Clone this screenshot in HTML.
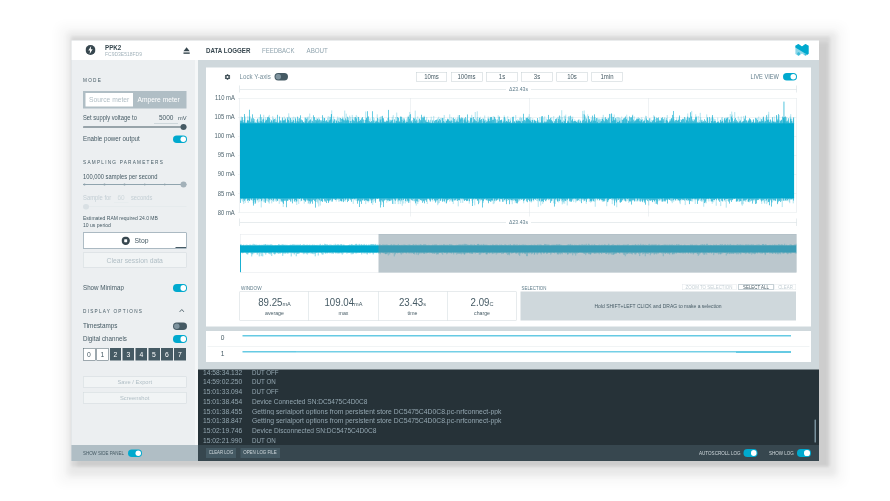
<!DOCTYPE html>
<html><head><meta charset="utf-8"><title>PPK2</title>
<style>
html,body{margin:0;padding:0;background:#fff;}
body{width:890px;height:501px;overflow:hidden;position:relative;font-family:"Liberation Sans",sans-serif;}
#s{position:absolute;left:0;top:0;width:1780.0px;height:1002.0px;transform:scale(0.5);transform-origin:0 0;filter:blur(1.3px);}
.a{position:absolute;}
.t{white-space:nowrap;}
</style></head><body><div id="s">
<div class="a" style="left:143.00px;top:81.00px;width:1495.00px;height:841.00px;background:#cfd8dc;box-shadow:14.00px 8.00px 6.00px 6.00px rgba(0,0,0,0.04), 10.00px 1.00px 6.00px 11.00px rgba(0,0,0,0.075), 13.00px 6.00px 14.00px 23.00px rgba(0,0,0,0.065), 11.00px 7.00px 22.00px 39.00px rgba(0,0,0,0.035);"></div>
<div class="a" style="left:143.00px;top:81.00px;width:1495.00px;height:38.60px;background:#fff;"></div>
<div class="a" style="left:143.00px;top:119.60px;width:253.00px;height:770.80px;background:#eceff1;"></div>
<div class="a" style="left:143.00px;top:890.40px;width:253.00px;height:31.60px;background:#b0bec5;"></div>
<div class="a" style="left:390.00px;top:119.60px;width:6.00px;height:770.80px;background:#f5f7f8;"></div>
<div class="a" style="left:396.00px;top:738.80px;width:1242.00px;height:151.60px;background:#263238;"></div>
<div class="a" style="left:396.00px;top:890.40px;width:1242.00px;height:31.60px;background:#37474f;"></div>
<svg class="a" style="left:170.80px;top:90.00px;width:20.00px;height:20.00px" viewBox="0 0 24 24"><circle cx="12" cy="12" r="12" fill="#37474f"/><path d="M13.6 2.6 L6.8 13.2 H11 L10 21.4 L17.2 10.4 H12.8 Z" fill="#fff"/></svg>
<div class="a t" style="top:85.12px;line-height:19.35px;font-size:13.82px;color:#37474f;font-weight:bold;left:210.00px;transform:scaleX(0.9027);transform-origin:0 50%;">PPK2</div>
<div class="a t" style="top:100.39px;line-height:14.82px;font-size:10.58px;color:#a3b3bb;left:210.00px;transform:scaleX(0.9458);transform-origin:0 50%;">FC9D3E518FD9</div>
<svg class="a" style="left:366.00px;top:94.00px;width:14.40px;height:14.80px" viewBox="0 0 24 26"><path d="M12 1 L23 15 H1 Z" fill="#37474f"/><rect x="1" y="19" width="22" height="5" fill="#37474f"/></svg>
<div class="a t" style="top:89.72px;line-height:20.56px;font-size:14.69px;color:#37474f;font-weight:bold;left:411.60px;transform:scaleX(0.8393);transform-origin:0 50%;">DATA LOGGER</div>
<div class="a t" style="top:89.72px;line-height:20.56px;font-size:14.69px;color:#90a4ae;left:524.00px;transform:scaleX(0.8210);transform-origin:0 50%;">FEEDBACK</div>
<div class="a t" style="top:89.72px;line-height:20.56px;font-size:14.69px;color:#90a4ae;left:613.20px;transform:scaleX(0.8459);transform-origin:0 50%;">ABOUT</div>
<svg class="a" style="left:1590.40px;top:88.00px;width:28.00px;height:24.00px" viewBox="0 0 14 12"><path d="M0.4 1.8 L3.4 0 L7 2.4 L10.4 0 L13.6 1.8 V10 L10.4 12 L7 9.4 L3.6 12 L0.4 10 Z" fill="#8ad7e9"/><path d="M0.4 1.8 L3.4 0 L7 2.4 L10.4 0 L13.6 1.8 V9.8 L12.2 10.7 L0.4 3.6 Z" fill="#00a9ce"/><path d="M2.2 9.0 L3.6 8.1 L5 9.0 V10.6 L3.6 11.5 L2.2 10.6 Z" fill="#3bbcda"/><path d="M9.2 10.0 L10.4 9.3 L11.6 10.2 L10.4 11.4 Z" fill="#3bbcda"/></svg>
<div class="a t" style="top:153.42px;line-height:13.16px;font-size:9.40px;color:#455a64;left:166.20px;letter-spacing:2.40px;">MODE</div>
<div class="a" style="left:166.20px;top:182.00px;width:206.80px;height:35.00px;background:#b0bec5;"></div>
<div class="a" style="left:171.20px;top:186.20px;width:94.80px;height:27.20px;background:#fff;"></div>
<div class="a t" style="top:189.12px;line-height:20.56px;font-size:14.69px;color:#b0bec5;left:178.00px;transform:scaleX(0.9142);transform-origin:0 50%;">Source meter</div>
<div class="a t" style="top:189.12px;line-height:20.56px;font-size:14.69px;color:#fff;left:275.20px;transform:scaleX(0.9070);transform-origin:0 50%;">Ampere meter</div>
<div class="a t" style="top:227.08px;line-height:17.84px;font-size:12.74px;color:#455a64;left:166.20px;transform:scaleX(0.9111);transform-origin:0 50%;">Set supply voltage to</div>
<div class="a t" style="top:225.12px;line-height:20.56px;font-size:14.69px;color:#455a64;left:317.60px;transform:scaleX(0.8875);transform-origin:0 50%;">5000</div>
<div class="a" style="left:308.40px;top:245.60px;width:47.20px;height:1.00px;background:#b0bec5;"></div>
<div class="a t" style="top:228.13px;line-height:16.93px;font-size:12.10px;color:#455a64;left:355.60px;transform:scaleX(0.9479);transform-origin:0 50%;">mV</div>
<div class="a" style="left:166.20px;top:253.00px;width:206.80px;height:2.20px;background:#455a64;border-radius:1.00px;"></div>
<div class="a" style="left:361.20px;top:248.40px;width:11.60px;height:11.60px;background:#455a64;border-radius:6.00px;"></div>
<div class="a t" style="top:269.08px;line-height:17.84px;font-size:12.74px;color:#455a64;left:166.20px;transform:scaleX(0.9717);transform-origin:0 50%;">Enable power output</div>
<div class="a" style="left:346.00px;top:271.00px;width:28.00px;height:15.20px;background:#00a9ce;border-radius:7.60px;"></div>
<div class="a" style="left:360.70px;top:272.90px;width:11.40px;height:11.40px;background:#ffffff;border-radius:5.70px;"></div>
<div class="a t" style="top:316.62px;line-height:13.16px;font-size:9.40px;color:#455a64;left:166.20px;letter-spacing:2.47px;">SAMPLING PARAMETERS</div>
<div class="a t" style="top:344.08px;line-height:17.84px;font-size:12.74px;color:#455a64;left:166.20px;transform:scaleX(0.9104);transform-origin:0 50%;">100,000 samples per second</div>
<div class="a" style="left:166.20px;top:368.40px;width:206.80px;height:1.60px;background:#90a4ae;"></div>
<div class="a" style="left:167.00px;top:367.40px;width:3.60px;height:3.60px;background:#90a4ae;border-radius:1.80px;"></div>
<div class="a" style="left:207.40px;top:367.40px;width:3.60px;height:3.60px;background:#90a4ae;border-radius:1.80px;"></div>
<div class="a" style="left:247.40px;top:367.40px;width:3.60px;height:3.60px;background:#90a4ae;border-radius:1.80px;"></div>
<div class="a" style="left:287.60px;top:367.40px;width:3.60px;height:3.60px;background:#90a4ae;border-radius:1.80px;"></div>
<div class="a" style="left:327.80px;top:367.40px;width:3.60px;height:3.60px;background:#90a4ae;border-radius:1.80px;"></div>
<div class="a" style="left:361.20px;top:363.40px;width:11.60px;height:11.60px;background:#a3b1b9;border-radius:6.00px;"></div>
<div class="a t" style="top:387.48px;line-height:17.84px;font-size:12.74px;color:#c3ced4;left:166.20px;transform:scaleX(0.9185);transform-origin:0 50%;">Sample for</div>
<div class="a t" style="top:386.22px;line-height:19.96px;font-size:14.26px;color:#cfd8dc;left:235.20px;transform:scaleX(0.9081);transform-origin:0 50%;">60</div>
<div class="a" style="left:227.60px;top:404.80px;width:29.60px;height:0.80px;background:#e3e8eb;"></div>
<div class="a t" style="top:387.48px;line-height:17.84px;font-size:12.74px;color:#c3ced4;left:262.00px;transform:scaleX(0.9017);transform-origin:0 50%;">seconds</div>
<div class="a" style="left:166.20px;top:412.60px;width:206.80px;height:1.20px;background:#e1e6e9;"></div>
<div class="a" style="left:166.40px;top:407.60px;width:11.20px;height:11.20px;background:#d9e0e4;border-radius:6.00px;"></div>
<div class="a t" style="top:427.84px;line-height:15.12px;font-size:10.80px;color:#455a64;left:166.20px;transform:scaleX(0.9312);transform-origin:0 50%;">Estimated RAM required 24.0 MB</div>
<div class="a t" style="top:442.44px;line-height:15.12px;font-size:10.80px;color:#455a64;left:166.20px;transform:scaleX(0.9387);transform-origin:0 50%;">10 us period</div>
<div class="a" style="left:166.20px;top:465.20px;width:206.80px;height:31.60px;background:#fff;border:1.10px solid #607d8b;box-sizing:border-box;"></div>
<div class="a" style="left:350.80px;top:494.00px;width:21.60px;height:2.00px;background:#455a64;"></div>
<svg class="a" style="left:242.80px;top:473.00px;width:16.80px;height:16.80px" viewBox="0 0 24 24"><circle cx="12" cy="12" r="12" fill="#37474f"/><rect x="7.8" y="7.8" width="8.4" height="8.4" rx="1.2" fill="#fff"/></svg>
<div class="a t" style="top:470.32px;line-height:20.56px;font-size:14.69px;color:#455a64;left:269.20px;transform:scaleX(0.9267);transform-origin:0 50%;">Stop</div>
<div class="a" style="left:166.20px;top:505.20px;width:206.80px;height:29.60px;background:#f1f4f5;border:1.00px solid #cfd8dc;box-sizing:border-box;"></div>
<div class="a t" style="top:509.52px;line-height:20.56px;font-size:14.69px;color:#b0bec5;left:213.20px;transform:scaleX(0.9272);transform-origin:0 50%;">Clear session data</div>
<div class="a t" style="top:565.68px;line-height:17.84px;font-size:12.74px;color:#455a64;left:166.20px;transform:scaleX(0.9787);transform-origin:0 50%;">Show Minimap</div>
<div class="a" style="left:346.00px;top:568.40px;width:28.00px;height:15.20px;background:#00a9ce;border-radius:7.60px;"></div>
<div class="a" style="left:360.70px;top:570.30px;width:11.40px;height:11.40px;background:#ffffff;border-radius:5.70px;"></div>
<div class="a t" style="top:614.62px;line-height:13.16px;font-size:9.40px;color:#455a64;left:166.20px;letter-spacing:2.43px;">DISPLAY OPTIONS</div>
<svg class="a" style="left:357.60px;top:617.20px;width:11.20px;height:8.00px" viewBox="0 0 14 10"><path d="M1.5 8.5 L7 2.5 L12.5 8.5" fill="none" stroke="#455a64" stroke-width="2.2"/></svg>
<div class="a t" style="top:643.28px;line-height:17.84px;font-size:12.74px;color:#455a64;left:166.20px;transform:scaleX(1.0011);transform-origin:0 50%;">Timestamps</div>
<div class="a" style="left:346.00px;top:644.80px;width:28.00px;height:15.20px;background:#455a64;border-radius:7.60px;"></div>
<div class="a" style="left:347.90px;top:646.70px;width:11.40px;height:11.40px;background:#7f949f;border-radius:5.70px;"></div>
<div class="a t" style="top:669.28px;line-height:17.84px;font-size:12.74px;color:#455a64;left:166.20px;transform:scaleX(0.9759);transform-origin:0 50%;">Digital channels</div>
<div class="a" style="left:346.00px;top:670.40px;width:28.00px;height:15.20px;background:#00a9ce;border-radius:7.60px;"></div>
<div class="a" style="left:360.70px;top:672.30px;width:11.40px;height:11.40px;background:#ffffff;border-radius:5.70px;"></div>
<div class="a" style="left:166.00px;top:696.00px;width:24.80px;height:24.80px;background:#fff;border:1.20px solid #455a64;box-sizing:border-box;"></div>
<div class="a t" style="top:697.72px;line-height:20.56px;font-size:14.69px;color:#455a64;left:-121.60px;width:600.00px;text-align:center;transform:scaleX(0.9259);transform-origin:50% 50%;">0</div>
<div class="a" style="left:192.80px;top:696.00px;width:24.00px;height:24.80px;background:#fff;border:1.20px solid #455a64;box-sizing:border-box;"></div>
<div class="a t" style="top:697.72px;line-height:20.56px;font-size:14.69px;color:#455a64;left:-95.20px;width:600.00px;text-align:center;transform:scaleX(0.9259);transform-origin:50% 50%;">1</div>
<div class="a" style="left:220.00px;top:696.00px;width:22.00px;height:24.80px;background:#455a64;"></div>
<div class="a t" style="top:697.72px;line-height:20.56px;font-size:14.69px;color:#fff;left:-69.00px;width:600.00px;text-align:center;transform:scaleX(0.9259);transform-origin:50% 50%;">2</div>
<div class="a" style="left:245.20px;top:696.00px;width:22.80px;height:24.80px;background:#455a64;"></div>
<div class="a t" style="top:697.72px;line-height:20.56px;font-size:14.69px;color:#fff;left:-43.40px;width:600.00px;text-align:center;transform:scaleX(0.9259);transform-origin:50% 50%;">3</div>
<div class="a" style="left:271.20px;top:696.00px;width:22.80px;height:24.80px;background:#455a64;"></div>
<div class="a t" style="top:697.72px;line-height:20.56px;font-size:14.69px;color:#fff;left:-17.40px;width:600.00px;text-align:center;transform:scaleX(0.9259);transform-origin:50% 50%;">4</div>
<div class="a" style="left:296.80px;top:696.00px;width:23.20px;height:24.80px;background:#455a64;"></div>
<div class="a t" style="top:697.72px;line-height:20.56px;font-size:14.69px;color:#fff;left:8.40px;width:600.00px;text-align:center;transform:scaleX(0.9259);transform-origin:50% 50%;">5</div>
<div class="a" style="left:322.00px;top:696.00px;width:24.00px;height:24.80px;background:#455a64;"></div>
<div class="a t" style="top:697.72px;line-height:20.56px;font-size:14.69px;color:#fff;left:34.00px;width:600.00px;text-align:center;transform:scaleX(0.9259);transform-origin:50% 50%;">6</div>
<div class="a" style="left:348.00px;top:696.00px;width:24.00px;height:24.80px;background:#455a64;"></div>
<div class="a t" style="top:697.72px;line-height:20.56px;font-size:14.69px;color:#fff;left:60.00px;width:600.00px;text-align:center;transform:scaleX(0.9259);transform-origin:50% 50%;">7</div>
<div class="a" style="left:166.20px;top:752.80px;width:206.80px;height:22.40px;background:#f1f4f5;border:1.00px solid #cfd8dc;box-sizing:border-box;"></div>
<div class="a t" style="top:754.63px;line-height:17.54px;font-size:12.53px;color:#b0bec5;left:234.80px;transform:scaleX(0.9201);transform-origin:0 50%;">Save / Export</div>
<div class="a" style="left:166.20px;top:784.00px;width:206.80px;height:22.80px;background:#f1f4f5;border:1.00px solid #cfd8dc;box-sizing:border-box;"></div>
<div class="a t" style="top:787.23px;line-height:17.54px;font-size:12.53px;color:#b0bec5;left:240.00px;transform:scaleX(0.9278);transform-origin:0 50%;">Screenshot</div>
<div class="a t" style="top:898.39px;line-height:14.82px;font-size:10.58px;color:#455a64;left:166.20px;transform:scaleX(0.8395);transform-origin:0 50%;">SHOW SIDE PANEL</div>
<div class="a" style="left:256.00px;top:898.80px;width:28.00px;height:15.20px;background:#00a9ce;border-radius:7.60px;"></div>
<div class="a" style="left:270.70px;top:900.70px;width:11.40px;height:11.40px;background:#ffffff;border-radius:5.70px;"></div>
<div class="a" style="left:411.60px;top:135.40px;width:1210.00px;height:517.80px;background:#fff;"></div>
<div class="a" style="left:411.60px;top:660.80px;width:1210.00px;height:63.60px;background:#fff;"></div>
<svg class="a" style="left:448.20px;top:146.60px;width:14.00px;height:14.00px" viewBox="0 0 24 24"><path fill="#37474f" d="M19.14 12.94c.04-.3.06-.61.06-.94 0-.32-.02-.64-.07-.94l2.03-1.58a.49.49 0 0 0 .12-.61l-1.92-3.32a.49.49 0 0 0-.59-.22l-2.39.96c-.5-.38-1.03-.7-1.62-.94l-.36-2.54a.484.484 0 0 0-.48-.41h-3.84c-.24 0-.43.17-.47.41l-.36 2.54c-.59.24-1.13.57-1.62.94l-2.39-.96a.49.49 0 0 0-.59.22L2.74 8.87c-.12.21-.08.47.12.61l2.03 1.58c-.05.3-.09.63-.09.94s.02.64.07.94l-2.03 1.58a.49.49 0 0 0-.12.61l1.92 3.32c.12.22.37.29.59.22l2.39-.96c.5.38 1.03.7 1.62.94l.36 2.54c.05.24.24.41.48.41h3.84c.24 0 .44-.17.47-.41l.36-2.54c.59-.24 1.13-.56 1.62-.94l2.39.96c.22.08.47 0 .59-.22l1.92-3.32c.12-.22.07-.47-.12-.61l-2.01-1.58zM12 15.6A3.6 3.6 0 1 1 12 8.4a3.6 3.6 0 0 1 0 7.2z"/></svg>
<div class="a t" style="top:144.28px;line-height:17.84px;font-size:12.74px;color:#78909c;left:478.80px;transform:scaleX(0.9710);transform-origin:0 50%;">Lock Y-axis</div>
<div class="a" style="left:548.80px;top:146.00px;width:27.20px;height:14.80px;background:#455a64;border-radius:7.40px;"></div>
<div class="a" style="left:550.70px;top:147.90px;width:11.00px;height:11.00px;background:#7f949f;border-radius:5.50px;"></div>
<div class="a" style="left:832.00px;top:143.60px;width:62.40px;height:19.00px;background:#fff;border:1.00px solid #c5cfd4;box-sizing:border-box;"></div>
<div class="a t" style="top:144.33px;line-height:18.14px;font-size:12.96px;color:#455a64;left:563.20px;width:600.00px;text-align:center;transform:scaleX(0.9259);transform-origin:50% 50%;">10ms</div>
<div class="a" style="left:902.16px;top:143.60px;width:62.40px;height:19.00px;background:#fff;border:1.00px solid #c5cfd4;box-sizing:border-box;"></div>
<div class="a t" style="top:144.33px;line-height:18.14px;font-size:12.96px;color:#455a64;left:633.36px;width:600.00px;text-align:center;transform:scaleX(0.9259);transform-origin:50% 50%;">100ms</div>
<div class="a" style="left:972.32px;top:143.60px;width:62.40px;height:19.00px;background:#fff;border:1.00px solid #c5cfd4;box-sizing:border-box;"></div>
<div class="a t" style="top:144.33px;line-height:18.14px;font-size:12.96px;color:#455a64;left:703.52px;width:600.00px;text-align:center;transform:scaleX(0.9259);transform-origin:50% 50%;">1s</div>
<div class="a" style="left:1042.48px;top:143.60px;width:62.40px;height:19.00px;background:#fff;border:1.00px solid #c5cfd4;box-sizing:border-box;"></div>
<div class="a t" style="top:144.33px;line-height:18.14px;font-size:12.96px;color:#455a64;left:773.68px;width:600.00px;text-align:center;transform:scaleX(0.9259);transform-origin:50% 50%;">3s</div>
<div class="a" style="left:1112.64px;top:143.60px;width:62.40px;height:19.00px;background:#fff;border:1.00px solid #c5cfd4;box-sizing:border-box;"></div>
<div class="a t" style="top:144.33px;line-height:18.14px;font-size:12.96px;color:#455a64;left:843.84px;width:600.00px;text-align:center;transform:scaleX(0.9259);transform-origin:50% 50%;">10s</div>
<div class="a" style="left:1182.80px;top:143.60px;width:62.40px;height:19.00px;background:#fff;border:1.00px solid #c5cfd4;box-sizing:border-box;"></div>
<div class="a t" style="top:144.33px;line-height:18.14px;font-size:12.96px;color:#455a64;left:914.00px;width:600.00px;text-align:center;transform:scaleX(0.9259);transform-origin:50% 50%;">1min</div>
<div class="a t" style="top:143.68px;line-height:17.84px;font-size:12.74px;color:#607d8b;left:1501.20px;transform:scaleX(0.8911);transform-origin:0 50%;">LIVE VIEW</div>
<div class="a" style="left:1566.00px;top:145.60px;width:28.00px;height:15.20px;background:#00a9ce;border-radius:7.60px;"></div>
<div class="a" style="left:1580.70px;top:147.50px;width:11.40px;height:11.40px;background:#ffffff;border-radius:5.70px;"></div>
<div class="a" style="left:479.60px;top:177.70px;width:532.40px;height:1.00px;background:#cfd8dc;"></div>
<div class="a" style="left:1062.00px;top:177.70px;width:530.80px;height:1.00px;background:#cfd8dc;"></div>
<div class="a" style="left:479.10px;top:170.60px;width:1.00px;height:14.80px;background:#cfd8dc;"></div>
<div class="a" style="left:1592.30px;top:170.60px;width:1.00px;height:14.80px;background:#cfd8dc;"></div>
<div class="a t" style="top:170.19px;line-height:14.82px;font-size:10.58px;color:#607d8b;left:736.80px;width:600.00px;text-align:center;transform:scaleX(0.9782);transform-origin:50% 50%;">Δ23.43s</div>
<div class="a" style="left:479.60px;top:444.30px;width:532.40px;height:1.00px;background:#cfd8dc;"></div>
<div class="a" style="left:1062.00px;top:444.30px;width:530.80px;height:1.00px;background:#cfd8dc;"></div>
<div class="a" style="left:479.10px;top:437.20px;width:1.00px;height:14.80px;background:#cfd8dc;"></div>
<div class="a" style="left:1592.30px;top:437.20px;width:1.00px;height:14.80px;background:#cfd8dc;"></div>
<div class="a t" style="top:436.79px;line-height:14.82px;font-size:10.58px;color:#607d8b;left:736.80px;width:600.00px;text-align:center;transform:scaleX(0.9782);transform-origin:50% 50%;">Δ23.43s</div>
<div class="a" style="left:475.60px;top:195.50px;width:1117.20px;height:1.00px;background:#e3e8eb;"></div>
<div class="a t" style="top:187.95px;line-height:17.69px;font-size:12.64px;color:#506670;right:1310.80px;text-align:right;transform:scaleX(0.9259);transform-origin:100% 50%;">110 mA</div>
<div class="a" style="left:475.60px;top:233.63px;width:1117.20px;height:1.00px;background:#e3e8eb;"></div>
<div class="a t" style="top:226.09px;line-height:17.69px;font-size:12.64px;color:#506670;right:1310.80px;text-align:right;transform:scaleX(0.9259);transform-origin:100% 50%;">105 mA</div>
<div class="a" style="left:475.60px;top:271.77px;width:1117.20px;height:1.00px;background:#e3e8eb;"></div>
<div class="a t" style="top:264.22px;line-height:17.69px;font-size:12.64px;color:#506670;right:1310.80px;text-align:right;transform:scaleX(0.9259);transform-origin:100% 50%;">100 mA</div>
<div class="a" style="left:475.60px;top:309.90px;width:1117.20px;height:1.00px;background:#e3e8eb;"></div>
<div class="a t" style="top:302.35px;line-height:17.69px;font-size:12.64px;color:#506670;right:1310.80px;text-align:right;transform:scaleX(0.9259);transform-origin:100% 50%;">95 mA</div>
<div class="a" style="left:475.60px;top:348.03px;width:1117.20px;height:1.00px;background:#e3e8eb;"></div>
<div class="a t" style="top:340.49px;line-height:17.69px;font-size:12.64px;color:#506670;right:1310.80px;text-align:right;transform:scaleX(0.9259);transform-origin:100% 50%;">90 mA</div>
<div class="a" style="left:475.60px;top:386.17px;width:1117.20px;height:1.00px;background:#e3e8eb;"></div>
<div class="a t" style="top:378.62px;line-height:17.69px;font-size:12.64px;color:#506670;right:1310.80px;text-align:right;transform:scaleX(0.9259);transform-origin:100% 50%;">85 mA</div>
<div class="a" style="left:475.60px;top:424.30px;width:1117.20px;height:1.00px;background:#e3e8eb;"></div>
<div class="a t" style="top:416.75px;line-height:17.69px;font-size:12.64px;color:#506670;right:1310.80px;text-align:right;transform:scaleX(0.9259);transform-origin:100% 50%;">80 mA</div>
<div class="a" style="left:820.50px;top:196.00px;width:1.00px;height:236.60px;background:#dfe5e8;"></div>
<div class="a" style="left:1058.30px;top:196.00px;width:1.00px;height:236.60px;background:#dfe5e8;"></div>
<div class="a" style="left:1295.90px;top:196.00px;width:1.00px;height:236.60px;background:#dfe5e8;"></div>
<div class="a" style="left:479.00px;top:196.00px;width:1.20px;height:228.80px;background:#dfe5e8;"></div>
<div class="a" style="left:1592.20px;top:196.00px;width:1.20px;height:228.80px;background:#dfe5e8;"></div>
<svg class="a" style="left:479.60px;top:196.00px;width:1113.20px;height:228.80px" viewBox="0 0 556.60 114.40" preserveAspectRatio="none"><rect x="0" y="25.30" width="554.10" height="74.90" fill="#00a9ce"/><path d="M0.50 25.80V22.84M1.50 25.80V22.77M2.50 25.80V19.16M3.50 25.80V24.49M4.50 25.80V15.99M5.50 25.80V25.28M6.50 25.80V25.06M7.50 25.80V22.11M8.50 25.80V22.58M9.50 25.80V11.72M10.50 25.80V23.70M11.50 25.80V20.42M12.50 25.80V16.30M13.50 25.80V20.20M14.50 25.80V24.67M15.50 25.80V24.97M16.50 25.80V25.05M17.50 25.80V21.13M18.50 25.80V24.57M19.50 25.80V24.88M20.50 25.80V16.41M21.50 25.80V23.27M22.50 25.80V24.31M23.50 25.80V20.65M24.50 25.80V24.72M25.50 25.80V23.12M26.50 25.80V22.05M27.50 25.80V19.08M28.50 25.80V18.69M29.50 25.80V19.77M30.50 25.80V24.34M31.50 25.80V22.16M32.50 25.80V24.58M33.50 25.80V22.08M34.50 25.80V21.05M35.50 25.80V24.14M36.50 25.80V23.96M37.50 25.80V16.79M38.50 25.80V25.26M39.50 25.80V18.62M40.50 25.80V22.40M41.50 25.80V24.75M42.50 25.80V19.45M43.50 25.80V22.52M44.50 25.80V22.24M45.50 25.80V20.48M46.50 25.80V24.66M47.50 25.80V20.46M48.50 25.80V22.12M49.50 25.80V24.70M50.50 25.80V20.11M51.50 25.80V24.27M52.50 25.80V23.86M53.50 25.80V21.98M54.50 25.80V24.87M55.50 25.80V20.47M56.50 25.80V24.80M57.50 25.80V18.66M58.50 25.80V23.58M59.50 25.80V20.12M60.50 25.80V17.32M61.50 25.80V21.57M62.50 25.80V22.24M63.50 25.80V24.24M64.50 25.80V25.25M65.50 25.80V19.60M66.50 25.80V21.06M67.50 25.80V24.83M68.50 25.80V23.40M69.50 25.80V22.33M70.50 25.80V21.42M71.50 25.80V24.85M72.50 25.80V22.82M73.50 25.80V17.29M74.50 25.80V19.08M75.50 25.80V21.96M76.50 25.80V22.24M77.50 25.80V20.58M78.50 25.80V22.30M79.50 25.80V21.50M80.50 25.80V22.25M81.50 25.80V22.42M82.50 25.80V17.22M83.50 25.80V22.93M84.50 25.80V20.03M85.50 25.80V23.31M86.50 25.80V22.09M87.50 25.80V23.78M88.50 25.80V24.23M89.50 25.80V22.22M90.50 25.80V21.49M91.50 25.80V16.10M92.50 25.80V24.87M93.50 25.80V23.48M94.50 25.80V21.29M95.50 25.80V25.07M96.50 25.80V22.69M97.50 25.80V24.79M98.50 25.80V23.16M99.50 25.80V23.88M100.50 25.80V20.01M101.50 25.80V20.96M102.50 25.80V20.69M103.50 25.80V21.70M104.50 25.80V22.41M105.50 25.80V20.35M106.50 25.80V22.52M107.50 25.80V18.78M108.50 25.80V22.33M109.50 25.80V25.23M110.50 25.80V22.96M111.50 25.80V25.10M112.50 25.80V21.40M113.50 25.80V22.31M114.50 25.80V23.18M115.50 25.80V19.00M116.50 25.80V20.40M117.50 25.80V24.26M118.50 25.80V18.95M119.50 25.80V22.99M120.50 25.80V21.93M121.50 25.80V20.40M122.50 25.80V19.24M123.50 25.80V21.47M124.50 25.80V24.94M125.50 25.80V21.84M126.50 25.80V19.88M127.50 25.80V13.20M128.50 25.80V18.44M129.50 25.80V23.26M130.50 25.80V24.04M131.50 25.80V22.98M132.50 25.80V13.22M133.50 25.80V22.33M134.50 25.80V24.83M135.50 25.80V24.15M136.50 25.80V22.75M137.50 25.80V19.91M138.50 25.80V24.26M139.50 25.80V24.55M140.50 25.80V21.54M141.50 25.80V24.39M142.50 25.80V17.87M143.50 25.80V20.20M144.50 25.80V24.00M145.50 25.80V24.16M146.50 25.80V22.56M147.50 25.80V23.21M148.50 25.80V11.90M149.50 25.80V24.41M150.50 25.80V23.59M151.50 25.80V22.65M152.50 25.80V21.75M153.50 25.80V25.24M154.50 25.80V21.37M155.50 25.80V24.62M156.50 25.80V23.06M157.50 25.80V19.02M158.50 25.80V19.70M159.50 25.80V23.63M160.50 25.80V18.53M161.50 25.80V18.75M162.50 25.80V24.42M163.50 25.80V23.04M164.50 25.80V21.46M165.50 25.80V25.00M166.50 25.80V23.93M167.50 25.80V23.99M168.50 25.80V18.69M169.50 25.80V20.72M170.50 25.80V16.17M171.50 25.80V23.36M172.50 25.80V24.74M173.50 25.80V19.90M174.50 25.80V20.80M175.50 25.80V22.82M176.50 25.80V21.50M177.50 25.80V25.22M178.50 25.80V24.67M179.50 25.80V20.91M180.50 25.80V22.31M181.50 25.80V16.75M182.50 25.80V19.43M183.50 25.80V19.57M184.50 25.80V18.86M185.50 25.80V22.45M186.50 25.80V23.92M187.50 25.80V23.86M188.50 25.80V21.78M189.50 25.80V24.65M190.50 25.80V24.84M191.50 25.80V25.19M192.50 25.80V22.44M193.50 25.80V25.02M194.50 25.80V22.87M195.50 25.80V21.99M196.50 25.80V21.81M197.50 25.80V24.35M198.50 25.80V22.96M199.50 25.80V20.94M200.50 25.80V22.23M201.50 25.80V25.14M202.50 25.80V20.05M203.50 25.80V22.91M204.50 25.80V24.48M205.50 25.80V25.03M206.50 25.80V23.08M207.50 25.80V20.73M208.50 25.80V21.41M209.50 25.80V22.93M210.50 25.80V23.49M211.50 25.80V22.44M212.50 25.80V24.91M213.50 25.80V19.61M214.50 25.80V20.94M215.50 25.80V24.31M216.50 25.80V23.54M217.50 25.80V23.42M218.50 25.80V23.78M219.50 25.80V17.04M220.50 25.80V21.40M221.50 25.80V19.43M222.50 25.80V19.80M223.50 25.80V25.18M224.50 25.80V20.33M225.50 25.80V19.07M226.50 25.80V24.26M227.50 25.80V16.45M228.50 25.80V24.97M229.50 25.80V24.92M230.50 25.80V19.74M231.50 25.80V19.95M232.50 25.80V24.59M233.50 25.80V19.03M234.50 25.80V21.07M235.50 25.80V22.49M236.50 25.80V23.10M237.50 25.80V24.40M238.50 25.80V23.61M239.50 25.80V19.78M240.50 25.80V21.97M241.50 25.80V21.11M242.50 25.80V25.12M243.50 25.80V20.72M244.50 25.80V22.76M245.50 25.80V24.83M246.50 25.80V23.85M247.50 25.80V23.44M248.50 25.80V21.24M249.50 25.80V23.23M250.50 25.80V19.29M251.50 25.80V18.96M252.50 25.80V21.95M253.50 25.80V21.95M254.50 25.80V18.82M255.50 25.80V20.72M256.50 25.80V24.85M257.50 25.80V24.61M258.50 25.80V23.27M259.50 25.80V18.61M260.50 25.80V22.21M261.50 25.80V21.95M262.50 25.80V24.76M263.50 25.80V23.52M264.50 25.80V19.09M265.50 25.80V24.18M266.50 25.80V23.00M267.50 25.80V23.76M268.50 25.80V21.07M269.50 25.80V23.85M270.50 25.80V22.66M271.50 25.80V25.19M272.50 25.80V18.92M273.50 25.80V18.70M274.50 25.80V23.50M275.50 25.80V25.06M276.50 25.80V22.58M277.50 25.80V23.52M278.50 25.80V22.64M279.50 25.80V22.93M280.50 25.80V23.56M281.50 25.80V25.01M282.50 25.80V22.87M283.50 25.80V15.76M284.50 25.80V21.88M285.50 25.80V22.62M286.50 25.80V20.05M287.50 25.80V20.03M288.50 25.80V21.17M289.50 25.80V22.29M290.50 25.80V23.03M291.50 25.80V24.21M292.50 25.80V22.03M293.50 25.80V24.80M294.50 25.80V22.22M295.50 25.80V22.89M296.50 25.80V24.99M297.50 25.80V20.02M298.50 25.80V24.48M299.50 25.80V24.61M300.50 25.80V24.89M301.50 25.80V18.39M302.50 25.80V18.12M303.50 25.80V25.06M304.50 25.80V23.53M305.50 25.80V24.30M306.50 25.80V23.64M307.50 25.80V21.88M308.50 25.80V16.91M309.50 25.80V21.51M310.50 25.80V19.81M311.50 25.80V22.11M312.50 25.80V23.40M313.50 25.80V25.10M314.50 25.80V23.14M315.50 25.80V21.05M316.50 25.80V20.54M317.50 25.80V25.04M318.50 25.80V20.84M319.50 25.80V17.56M320.50 25.80V21.63M321.50 25.80V24.42M322.50 25.80V24.16M323.50 25.80V25.15M324.50 25.80V23.20M325.50 25.80V20.87M326.50 25.80V25.10M327.50 25.80V23.30M328.50 25.80V23.40M329.50 25.80V24.67M330.50 25.80V17.72M331.50 25.80V22.51M332.50 25.80V20.95M333.50 25.80V23.28M334.50 25.80V23.01M335.50 25.80V23.06M336.50 25.80V24.06M337.50 25.80V24.72M338.50 25.80V21.63M339.50 25.80V24.90M340.50 25.80V23.08M341.50 25.80V24.95M342.50 25.80V22.56M343.50 25.80V21.82M344.50 25.80V16.49M345.50 25.80V23.22M346.50 25.80V20.48M347.50 25.80V24.79M348.50 25.80V18.11M349.50 25.80V20.95M350.50 25.80V23.68M351.50 25.80V22.68M352.50 25.80V17.63M353.50 25.80V22.44M354.50 25.80V16.36M355.50 25.80V22.83M356.50 25.80V19.99M357.50 25.80V23.84M358.50 25.80V25.23M359.50 25.80V24.85M360.50 25.80V24.43M361.50 25.80V22.98M362.50 25.80V20.89M363.50 25.80V22.33M364.50 25.80V23.21M365.50 25.80V19.14M366.50 25.80V20.96M367.50 25.80V21.85M368.50 25.80V20.36M369.50 25.80V15.93M370.50 25.80V25.26M371.50 25.80V15.40M372.50 25.80V23.04M373.50 25.80V19.02M374.50 25.80V22.31M375.50 25.80V19.95M376.50 25.80V25.19M377.50 25.80V23.99M378.50 25.80V23.93M379.50 25.80V23.05M380.50 25.80V25.24M381.50 25.80V25.12M382.50 25.80V22.05M383.50 25.80V20.43M384.50 25.80V19.71M385.50 25.80V18.52M386.50 25.80V21.14M387.50 25.80V25.23M388.50 25.80V22.96M389.50 25.80V18.47M390.50 25.80V19.35M391.50 25.80V19.24M392.50 25.80V17.45M393.50 25.80V21.62M394.50 25.80V23.34M395.50 25.80V22.64M396.50 25.80V20.67M397.50 25.80V21.02M398.50 25.80V21.13M399.50 25.80V23.18M400.50 25.80V23.46M401.50 25.80V22.01M402.50 25.80V24.31M403.50 25.80V23.24M404.50 25.80V22.54M405.50 25.80V24.94M406.50 25.80V20.49M407.50 25.80V21.99M408.50 25.80V22.82M409.50 25.80V20.25M410.50 25.80V23.70M411.50 25.80V24.22M412.50 25.80V22.75M413.50 25.80V21.72M414.50 25.80V18.53M415.50 25.80V24.31M416.50 25.80V19.62M417.50 25.80V20.06M418.50 25.80V19.42M419.50 25.80V22.91M420.50 25.80V22.63M421.50 25.80V20.13M422.50 25.80V19.23M423.50 25.80V21.21M424.50 25.80V24.95M425.50 25.80V25.12M426.50 25.80V21.96M427.50 25.80V22.66M428.50 25.80V24.63M429.50 25.80V23.48M430.50 25.80V22.49M431.50 25.80V20.21M432.50 25.80V16.91M433.50 25.80V13.00M434.50 25.80V23.24M435.50 25.80V22.17M436.50 25.80V21.85M437.50 25.80V22.79M438.50 25.80V22.08M439.50 25.80V17.49M440.50 25.80V24.13M441.50 25.80V21.82M442.50 25.80V20.92M443.50 25.80V20.89M444.50 25.80V18.98M445.50 25.80V24.40M446.50 25.80V22.42M447.50 25.80V18.66M448.50 25.80V23.36M449.50 25.80V19.76M450.50 25.80V14.24M451.50 25.80V18.51M452.50 25.80V22.59M453.50 25.80V23.34M454.50 25.80V21.43M455.50 25.80V19.33M456.50 25.80V19.22M457.50 25.80V24.44M458.50 25.80V24.95M459.50 25.80V24.51M460.50 25.80V24.73M461.50 25.80V23.54M462.50 25.80V24.16M463.50 25.80V23.11M464.50 25.80V21.20M465.50 25.80V22.71M466.50 25.80V24.27M467.50 25.80V19.42M468.50 25.80V25.19M469.50 25.80V18.99M470.50 25.80V25.04M471.50 25.80V23.03M472.50 25.80V17.02M473.50 25.80V23.52M474.50 25.80V23.18M475.50 25.80V23.13M476.50 25.80V24.77M477.50 25.80V24.04M478.50 25.80V23.70M479.50 25.80V24.89M480.50 25.80V21.80M481.50 25.80V23.52M482.50 25.80V23.01M483.50 25.80V25.21M484.50 25.80V20.34M485.50 25.80V22.53M486.50 25.80V20.65M487.50 25.80V19.64M488.50 25.80V24.68M489.50 25.80V21.63M490.50 25.80V24.29M491.50 25.80V18.55M492.50 25.80V20.29M493.50 25.80V23.16M494.50 25.80V21.47M495.50 25.80V19.95M496.50 25.80V21.82M497.50 25.80V23.22M498.50 25.80V24.43M499.50 25.80V23.32M500.50 25.80V22.51M501.50 25.80V24.56M502.50 25.80V23.40M503.50 25.80V22.95M504.50 25.80V20.55M505.50 25.80V17.65M506.50 25.80V22.40M507.50 25.80V24.48M508.50 25.80V22.69M509.50 25.80V20.24M510.50 25.80V21.37M511.50 25.80V24.60M512.50 25.80V23.91M513.50 25.80V21.39M514.50 25.80V24.77M515.50 25.80V19.84M516.50 25.80V20.54M517.50 25.80V22.07M518.50 25.80V24.25M519.50 25.80V23.64M520.50 25.80V23.56M521.50 25.80V21.19M522.50 25.80V22.89M523.50 25.80V18.76M524.50 25.80V24.36M525.50 25.80V23.12M526.50 25.80V17.19M527.50 25.80V21.83M528.50 25.80V21.47M529.50 25.80V23.99M530.50 25.80V21.50M531.50 25.80V24.73M532.50 25.80V19.19M533.50 25.80V23.82M534.50 25.80V23.79M535.50 25.80V24.10M536.50 25.80V17.04M537.50 25.80V22.47M538.50 25.80V16.09M539.50 25.80V24.81M540.50 25.80V22.71M541.50 25.80V21.81M542.50 25.80V18.64M543.50 25.80V19.50M544.50 25.80V19.12M545.50 25.80V18.58M546.50 25.80V23.40M547.50 25.80V22.78M548.50 25.80V20.24M549.50 25.80V25.15M550.50 25.80V20.63M551.50 25.80V22.94M552.50 25.80V25.07M553.50 25.80V19.54" stroke="#00a9ce" stroke-width="1.0" fill="none" opacity="0.6"/><path d="M0.50 99.70V104.92M1.50 99.70V100.71M2.50 99.70V100.50M3.50 99.70V101.31M4.50 99.70V102.80M5.50 99.70V101.35M6.50 99.70V100.66M7.50 99.70V102.86M8.50 99.70V101.92M9.50 99.70V103.04M10.50 99.70V100.27M11.50 99.70V102.20M12.50 99.70V100.41M13.50 99.70V107.59M14.50 99.70V101.90M15.50 99.70V105.62M16.50 99.70V100.26M17.50 99.70V102.36M18.50 99.70V100.84M19.50 99.70V100.47M20.50 99.70V101.08M21.50 99.70V102.87M22.50 99.70V100.46M23.50 99.70V100.27M24.50 99.70V100.80M25.50 99.70V104.96M26.50 99.70V100.35M27.50 99.70V100.39M28.50 99.70V101.15M29.50 99.70V101.47M30.50 99.70V100.90M31.50 99.70V101.96M32.50 99.70V100.43M33.50 99.70V101.93M34.50 99.70V100.47M35.50 99.70V100.57M36.50 99.70V101.09M37.50 99.70V102.72M38.50 99.70V101.11M39.50 99.70V100.84M40.50 99.70V101.20M41.50 99.70V103.54M42.50 99.70V103.58M43.50 99.70V105.89M44.50 99.70V102.69M45.50 99.70V102.78M46.50 99.70V109.28M47.50 99.70V102.71M48.50 99.70V100.95M49.50 99.70V101.80M50.50 99.70V103.59M51.50 99.70V100.88M52.50 99.70V105.38M53.50 99.70V100.87M54.50 99.70V103.58M55.50 99.70V102.02M56.50 99.70V103.41M57.50 99.70V100.37M58.50 99.70V100.61M59.50 99.70V101.04M60.50 99.70V100.23M61.50 99.70V102.68M62.50 99.70V100.34M63.50 99.70V101.82M64.50 99.70V102.36M65.50 99.70V103.69M66.50 99.70V101.66M67.50 99.70V101.67M68.50 99.70V102.55M69.50 99.70V103.26M70.50 99.70V105.53M71.50 99.70V103.57M72.50 99.70V105.71M73.50 99.70V101.73M74.50 99.70V103.07M75.50 99.70V109.62M76.50 99.70V101.11M77.50 99.70V100.64M78.50 99.70V101.27M79.50 99.70V101.65M80.50 99.70V100.35M81.50 99.70V102.99M82.50 99.70V104.01M83.50 99.70V100.93M84.50 99.70V102.66M85.50 99.70V103.54M86.50 99.70V105.06M87.50 99.70V102.51M88.50 99.70V105.04M89.50 99.70V102.48M90.50 99.70V102.28M91.50 99.70V100.67M92.50 99.70V103.54M93.50 99.70V100.82M94.50 99.70V101.26M95.50 99.70V102.04M96.50 99.70V100.93M97.50 99.70V100.40M98.50 99.70V100.61M99.50 99.70V100.83M100.50 99.70V102.79M101.50 99.70V103.31M102.50 99.70V101.12M103.50 99.70V104.12M104.50 99.70V100.30M105.50 99.70V101.53M106.50 99.70V100.40M107.50 99.70V104.08M108.50 99.70V102.98M109.50 99.70V100.24M110.50 99.70V101.58M111.50 99.70V103.77M112.50 99.70V101.15M113.50 99.70V100.67M114.50 99.70V101.23M115.50 99.70V100.65M116.50 99.70V100.37M117.50 99.70V105.72M118.50 99.70V102.25M119.50 99.70V109.02M120.50 99.70V103.22M121.50 99.70V105.91M122.50 99.70V102.25M123.50 99.70V100.67M124.50 99.70V102.82M125.50 99.70V102.08M126.50 99.70V102.21M127.50 99.70V103.18M128.50 99.70V103.12M129.50 99.70V100.40M130.50 99.70V101.11M131.50 99.70V105.16M132.50 99.70V101.40M133.50 99.70V101.13M134.50 99.70V100.70M135.50 99.70V104.81M136.50 99.70V100.49M137.50 99.70V100.92M138.50 99.70V100.24M139.50 99.70V103.53M140.50 99.70V109.51M141.50 99.70V102.44M142.50 99.70V103.64M143.50 99.70V109.06M144.50 99.70V102.38M145.50 99.70V101.52M146.50 99.70V101.88M147.50 99.70V102.58M148.50 99.70V101.82M149.50 99.70V102.82M150.50 99.70V102.67M151.50 99.70V101.69M152.50 99.70V105.91M153.50 99.70V100.63M154.50 99.70V101.39M155.50 99.70V102.84M156.50 99.70V100.54M157.50 99.70V100.32M158.50 99.70V101.75M159.50 99.70V102.16M160.50 99.70V100.75M161.50 99.70V102.16M162.50 99.70V100.28M163.50 99.70V101.98M164.50 99.70V100.86M165.50 99.70V103.00M166.50 99.70V100.93M167.50 99.70V102.68M168.50 99.70V104.85M169.50 99.70V100.60M170.50 99.70V100.56M171.50 99.70V102.21M172.50 99.70V102.61M173.50 99.70V100.96M174.50 99.70V100.72M175.50 99.70V105.36M176.50 99.70V103.25M177.50 99.70V103.54M178.50 99.70V100.95M179.50 99.70V100.97M180.50 99.70V102.08M181.50 99.70V102.60M182.50 99.70V104.79M183.50 99.70V103.30M184.50 99.70V105.34M185.50 99.70V102.30M186.50 99.70V103.78M187.50 99.70V100.62M188.50 99.70V100.51M189.50 99.70V101.67M190.50 99.70V103.56M191.50 99.70V100.42M192.50 99.70V101.78M193.50 99.70V100.96M194.50 99.70V102.45M195.50 99.70V104.62M196.50 99.70V101.77M197.50 99.70V102.20M198.50 99.70V101.19M199.50 99.70V100.67M200.50 99.70V102.78M201.50 99.70V100.46M202.50 99.70V103.78M203.50 99.70V100.97M204.50 99.70V103.34M205.50 99.70V101.45M206.50 99.70V105.21M207.50 99.70V102.28M208.50 99.70V101.74M209.50 99.70V101.03M210.50 99.70V100.51M211.50 99.70V100.89M212.50 99.70V103.71M213.50 99.70V100.58M214.50 99.70V102.39M215.50 99.70V101.74M216.50 99.70V100.74M217.50 99.70V102.93M218.50 99.70V102.06M219.50 99.70V102.06M220.50 99.70V100.29M221.50 99.70V100.60M222.50 99.70V100.43M223.50 99.70V101.39M224.50 99.70V102.88M225.50 99.70V102.06M226.50 99.70V103.02M227.50 99.70V102.78M228.50 99.70V100.85M229.50 99.70V103.25M230.50 99.70V100.97M231.50 99.70V100.70M232.50 99.70V108.01M233.50 99.70V101.14M234.50 99.70V100.44M235.50 99.70V101.13M236.50 99.70V101.17M237.50 99.70V102.66M238.50 99.70V106.18M239.50 99.70V101.02M240.50 99.70V100.77M241.50 99.70V101.40M242.50 99.70V109.49M243.50 99.70V103.12M244.50 99.70V101.24M245.50 99.70V100.59M246.50 99.70V101.89M247.50 99.70V101.30M248.50 99.70V105.24M249.50 99.70V102.99M250.50 99.70V103.79M251.50 99.70V102.33M252.50 99.70V102.57M253.50 99.70V100.25M254.50 99.70V102.75M255.50 99.70V101.38M256.50 99.70V102.23M257.50 99.70V101.82M258.50 99.70V100.27M259.50 99.70V103.45M260.50 99.70V100.95M261.50 99.70V100.99M262.50 99.70V103.80M263.50 99.70V100.26M264.50 99.70V102.13M265.50 99.70V101.10M266.50 99.70V106.15M267.50 99.70V101.12M268.50 99.70V102.12M269.50 99.70V106.19M270.50 99.70V101.08M271.50 99.70V102.01M272.50 99.70V101.55M273.50 99.70V101.41M274.50 99.70V101.71M275.50 99.70V103.26M276.50 99.70V105.22M277.50 99.70V105.40M278.50 99.70V101.18M279.50 99.70V101.32M280.50 99.70V101.00M281.50 99.70V101.84M282.50 99.70V101.10M283.50 99.70V103.15M284.50 99.70V101.67M285.50 99.70V100.86M286.50 99.70V103.40M287.50 99.70V104.22M288.50 99.70V101.81M289.50 99.70V103.26M290.50 99.70V100.78M291.50 99.70V103.06M292.50 99.70V100.35M293.50 99.70V102.35M294.50 99.70V101.11M295.50 99.70V101.82M296.50 99.70V100.51M297.50 99.70V100.79M298.50 99.70V100.45M299.50 99.70V103.25M300.50 99.70V100.42M301.50 99.70V103.18M302.50 99.70V103.14M303.50 99.70V104.14M304.50 99.70V101.40M305.50 99.70V103.11M306.50 99.70V101.83M307.50 99.70V100.54M308.50 99.70V100.60M309.50 99.70V100.89M310.50 99.70V104.91M311.50 99.70V103.23M312.50 99.70V100.75M313.50 99.70V100.67M314.50 99.70V108.58M315.50 99.70V101.39M316.50 99.70V100.22M317.50 99.70V103.60M318.50 99.70V100.35M319.50 99.70V103.08M320.50 99.70V100.58M321.50 99.70V100.97M322.50 99.70V101.82M323.50 99.70V101.28M324.50 99.70V101.55M325.50 99.70V102.93M326.50 99.70V100.91M327.50 99.70V101.79M328.50 99.70V100.24M329.50 99.70V103.30M330.50 99.70V103.59M331.50 99.70V103.68M332.50 99.70V101.43M333.50 99.70V100.58M334.50 99.70V100.36M335.50 99.70V100.87M336.50 99.70V100.62M337.50 99.70V102.64M338.50 99.70V102.15M339.50 99.70V100.70M340.50 99.70V100.45M341.50 99.70V105.16M342.50 99.70V100.67M343.50 99.70V100.78M344.50 99.70V102.81M345.50 99.70V101.03M346.50 99.70V103.89M347.50 99.70V100.56M348.50 99.70V100.43M349.50 99.70V100.74M350.50 99.70V102.89M351.50 99.70V103.36M352.50 99.70V101.09M353.50 99.70V102.99M354.50 99.70V100.82M355.50 99.70V100.49M356.50 99.70V100.45M357.50 99.70V101.53M358.50 99.70V100.90M359.50 99.70V102.45M360.50 99.70V101.34M361.50 99.70V102.22M362.50 99.70V102.05M363.50 99.70V103.35M364.50 99.70V102.82M365.50 99.70V100.58M366.50 99.70V100.21M367.50 99.70V104.12M368.50 99.70V102.23M369.50 99.70V100.91M370.50 99.70V100.93M371.50 99.70V100.23M372.50 99.70V100.51M373.50 99.70V100.59M374.50 99.70V107.56M375.50 99.70V101.58M376.50 99.70V104.40M377.50 99.70V100.22M378.50 99.70V101.91M379.50 99.70V100.46M380.50 99.70V104.54M381.50 99.70V103.79M382.50 99.70V102.28M383.50 99.70V100.75M384.50 99.70V101.14M385.50 99.70V103.37M386.50 99.70V100.37M387.50 99.70V100.95M388.50 99.70V100.41M389.50 99.70V103.31M390.50 99.70V103.29M391.50 99.70V106.55M392.50 99.70V101.85M393.50 99.70V101.79M394.50 99.70V103.31M395.50 99.70V100.48M396.50 99.70V100.53M397.50 99.70V102.62M398.50 99.70V100.34M399.50 99.70V100.70M400.50 99.70V103.68M401.50 99.70V100.95M402.50 99.70V103.70M403.50 99.70V101.66M404.50 99.70V104.57M405.50 99.70V106.72M406.50 99.70V101.75M407.50 99.70V102.83M408.50 99.70V101.04M409.50 99.70V102.29M410.50 99.70V102.69M411.50 99.70V102.36M412.50 99.70V104.16M413.50 99.70V102.01M414.50 99.70V103.46M415.50 99.70V101.81M416.50 99.70V105.79M417.50 99.70V106.43M418.50 99.70V101.01M419.50 99.70V101.71M420.50 99.70V100.75M421.50 99.70V101.00M422.50 99.70V103.55M423.50 99.70V100.30M424.50 99.70V103.37M425.50 99.70V103.41M426.50 99.70V101.19M427.50 99.70V105.55M428.50 99.70V101.24M429.50 99.70V101.92M430.50 99.70V100.33M431.50 99.70V100.32M432.50 99.70V100.40M433.50 99.70V102.14M434.50 99.70V100.83M435.50 99.70V102.39M436.50 99.70V100.90M437.50 99.70V101.07M438.50 99.70V102.38M439.50 99.70V102.76M440.50 99.70V101.93M441.50 99.70V100.89M442.50 99.70V101.54M443.50 99.70V102.09M444.50 99.70V102.62M445.50 99.70V100.56M446.50 99.70V102.09M447.50 99.70V100.83M448.50 99.70V102.02M449.50 99.70V106.14M450.50 99.70V102.89M451.50 99.70V100.66M452.50 99.70V101.19M453.50 99.70V100.59M454.50 99.70V100.85M455.50 99.70V101.01M456.50 99.70V100.67M457.50 99.70V105.95M458.50 99.70V102.59M459.50 99.70V100.71M460.50 99.70V100.29M461.50 99.70V101.84M462.50 99.70V100.65M463.50 99.70V101.47M464.50 99.70V105.06M465.50 99.70V103.71M466.50 99.70V101.02M467.50 99.70V100.73M468.50 99.70V101.17M469.50 99.70V100.62M470.50 99.70V101.12M471.50 99.70V103.51M472.50 99.70V103.55M473.50 99.70V101.87M474.50 99.70V102.13M475.50 99.70V101.04M476.50 99.70V102.24M477.50 99.70V100.51M478.50 99.70V102.47M479.50 99.70V103.82M480.50 99.70V100.80M481.50 99.70V102.73M482.50 99.70V103.16M483.50 99.70V100.47M484.50 99.70V102.25M485.50 99.70V101.18M486.50 99.70V101.02M487.50 99.70V100.96M488.50 99.70V103.61M489.50 99.70V105.61M490.50 99.70V102.29M491.50 99.70V103.98M492.50 99.70V102.18M493.50 99.70V100.52M494.50 99.70V101.03M495.50 99.70V100.32M496.50 99.70V103.60M497.50 99.70V103.38M498.50 99.70V101.28M499.50 99.70V103.61M500.50 99.70V103.22M501.50 99.70V100.79M502.50 99.70V100.55M503.50 99.70V102.69M504.50 99.70V102.45M505.50 99.70V101.81M506.50 99.70V101.87M507.50 99.70V100.92M508.50 99.70V103.74M509.50 99.70V101.80M510.50 99.70V101.05M511.50 99.70V102.63M512.50 99.70V105.64M513.50 99.70V101.77M514.50 99.70V101.51M515.50 99.70V106.02M516.50 99.70V105.52M517.50 99.70V101.89M518.50 99.70V101.86M519.50 99.70V100.68M520.50 99.70V100.71M521.50 99.70V103.42M522.50 99.70V102.59M523.50 99.70V101.88M524.50 99.70V100.99M525.50 99.70V100.93M526.50 99.70V102.11M527.50 99.70V101.14M528.50 99.70V104.04M529.50 99.70V107.28M530.50 99.70V101.38M531.50 99.70V108.60M532.50 99.70V101.40M533.50 99.70V102.12M534.50 99.70V102.28M535.50 99.70V102.65M536.50 99.70V100.50M537.50 99.70V106.14M538.50 99.70V103.63M539.50 99.70V102.98M540.50 99.70V104.01M541.50 99.70V100.31M542.50 99.70V100.23M543.50 99.70V102.71M544.50 99.70V100.27M545.50 99.70V102.26M546.50 99.70V100.97M547.50 99.70V102.07M548.50 99.70V101.08M549.50 99.70V100.68M550.50 99.70V100.85M551.50 99.70V101.08M552.50 99.70V100.53M553.50 99.70V102.60" stroke="#00a9ce" stroke-width="1.0" fill="none" opacity="0.6"/><path d="M0.25 25.80V24.54M0.75 25.80V21.73M1.25 25.80V18.53M1.75 25.80V19.20M2.25 25.80V23.55M2.75 25.80V22.17M3.25 25.80V24.13M3.75 25.80V22.02M4.25 25.80V21.88M4.75 25.80V18.00M5.25 25.80V19.38M5.75 25.80V23.99M6.25 25.80V25.12M6.75 25.80V23.82M7.25 25.80V22.82M7.75 25.80V18.29M8.25 25.80V22.32M8.75 25.80V24.97M9.25 25.80V18.59M9.75 25.80V20.21M10.25 25.80V18.44M10.75 25.80V25.14M11.25 25.80V24.25M11.75 25.80V22.60M12.25 25.80V25.00M12.75 25.80V23.34M13.25 25.80V23.37M13.75 25.80V22.90M14.25 25.80V20.95M14.75 25.80V21.18M15.25 25.80V23.86M15.75 25.80V23.89M16.25 25.80V24.61M16.75 25.80V21.90M17.25 25.80V24.80M17.75 25.80V20.22M18.25 25.80V22.63M18.75 25.80V24.08M19.25 25.80V19.15M19.75 25.80V23.19M20.25 25.80V23.05M20.75 25.80V23.41M21.25 25.80V19.13M21.75 25.80V19.15M22.25 25.80V21.14M22.75 25.80V21.91M23.25 25.80V22.24M23.75 25.80V16.82M24.25 25.80V24.32M24.75 25.80V24.61M25.25 25.80V21.30M25.75 25.80V19.24M26.25 25.80V21.85M26.75 25.80V23.38M27.25 25.80V20.97M27.75 25.80V20.05M28.25 25.80V24.65M28.75 25.80V21.89M29.25 25.80V16.89M29.75 25.80V23.57M30.25 25.80V24.44M30.75 25.80V20.90M31.25 25.80V23.45M31.75 25.80V22.93M32.25 25.80V23.24M32.75 25.80V18.18M33.25 25.80V19.92M33.75 25.80V20.90M34.25 25.80V23.81M34.75 25.80V24.75M35.25 25.80V20.68M35.75 25.80V20.24M36.25 25.80V21.82M36.75 25.80V25.03M37.25 25.80V24.87M37.75 25.80V22.61M38.25 25.80V24.59M38.75 25.80V24.26M39.25 25.80V24.03M39.75 25.80V22.77M40.25 25.80V25.00M40.75 25.80V23.23M41.25 25.80V22.24M41.75 25.80V23.16M42.25 25.80V20.38M42.75 25.80V23.07M43.25 25.80V21.97M43.75 25.80V22.55M44.25 25.80V18.66M44.75 25.80V22.60M45.25 25.80V21.75M45.75 25.80V24.88M46.25 25.80V23.73M46.75 25.80V24.39M47.25 25.80V19.02M47.75 25.80V19.26M48.25 25.80V22.47M48.75 25.80V15.33M49.25 25.80V18.66M49.75 25.80V23.01M50.25 25.80V19.58M50.75 25.80V23.92M51.25 25.80V21.72M51.75 25.80V22.33M52.25 25.80V19.49M52.75 25.80V23.37M53.25 25.80V22.59M53.75 25.80V18.71M54.25 25.80V25.21M54.75 25.80V23.03M55.25 25.80V18.95M55.75 25.80V20.62M56.25 25.80V23.48M56.75 25.80V22.72M57.25 25.80V22.69M57.75 25.80V23.16M58.25 25.80V19.53M58.75 25.80V21.01M59.25 25.80V23.35M59.75 25.80V24.60M60.25 25.80V22.78M60.75 25.80V21.74M61.25 25.80V25.20M61.75 25.80V25.03M62.25 25.80V23.08M62.75 25.80V23.36M63.25 25.80V24.26M63.75 25.80V24.01M64.25 25.80V23.49M64.75 25.80V19.59M65.25 25.80V23.29M65.75 25.80V22.91M66.25 25.80V24.24M66.75 25.80V19.71M67.25 25.80V19.02M67.75 25.80V20.25M68.25 25.80V18.53M68.75 25.80V25.05M69.25 25.80V23.49M69.75 25.80V15.58M70.25 25.80V24.91M70.75 25.80V21.86M71.25 25.80V22.79M71.75 25.80V19.54M72.25 25.80V23.42M72.75 25.80V25.08M73.25 25.80V24.54M73.75 25.80V24.04M74.25 25.80V19.38M74.75 25.80V24.50M75.25 25.80V25.14M75.75 25.80V23.63M76.25 25.80V19.73M76.75 25.80V23.30M77.25 25.80V21.11M77.75 25.80V23.57M78.25 25.80V25.11M78.75 25.80V19.46M79.25 25.80V20.47M79.75 25.80V24.81M80.25 25.80V25.27M80.75 25.80V23.91M81.25 25.80V24.80M81.75 25.80V23.68M82.25 25.80V24.44M82.75 25.80V22.11M83.25 25.80V19.39M83.75 25.80V25.14M84.25 25.80V20.48M84.75 25.80V19.77M85.25 25.80V25.01M85.75 25.80V22.64M86.25 25.80V23.32M86.75 25.80V23.29M87.25 25.80V23.80M87.75 25.80V19.82M88.25 25.80V18.16M88.75 25.80V22.46M89.25 25.80V23.54M89.75 25.80V18.74M90.25 25.80V19.25M90.75 25.80V18.93M91.25 25.80V16.17M91.75 25.80V12.38M92.25 25.80V24.90M92.75 25.80V21.50M93.25 25.80V22.72M93.75 25.80V18.54M94.25 25.80V21.09M94.75 25.80V23.42M95.25 25.80V24.97M95.75 25.80V21.49M96.25 25.80V22.42M96.75 25.80V23.47M97.25 25.80V20.22M97.75 25.80V18.61M98.25 25.80V25.26M98.75 25.80V19.87M99.25 25.80V25.20M99.75 25.80V19.51M100.25 25.80V24.01M100.75 25.80V24.22M101.25 25.80V23.97M101.75 25.80V23.99M102.25 25.80V19.93M102.75 25.80V18.58M103.25 25.80V20.20M103.75 25.80V22.74M104.25 25.80V25.17M104.75 25.80V12.57M105.25 25.80V22.21M105.75 25.80V23.27M106.25 25.80V15.71M106.75 25.80V21.22M107.25 25.80V22.31M107.75 25.80V21.99M108.25 25.80V20.15M108.75 25.80V19.30M109.25 25.80V23.14M109.75 25.80V17.63M110.25 25.80V25.26M110.75 25.80V19.17M111.25 25.80V23.08M111.75 25.80V22.63M112.25 25.80V16.89M112.75 25.80V19.16M113.25 25.80V24.75M113.75 25.80V22.87M114.25 25.80V19.27M114.75 25.80V19.37M115.25 25.80V25.13M115.75 25.80V20.53M116.25 25.80V16.93M116.75 25.80V22.71M117.25 25.80V18.60M117.75 25.80V23.23M118.25 25.80V23.38M118.75 25.80V19.00M119.25 25.80V23.48M119.75 25.80V20.73M120.25 25.80V24.66M120.75 25.80V22.33M121.25 25.80V23.07M121.75 25.80V23.58M122.25 25.80V19.13M122.75 25.80V25.22M123.25 25.80V24.85M123.75 25.80V24.88M124.25 25.80V21.90M124.75 25.80V24.49M125.25 25.80V25.21M125.75 25.80V13.47M126.25 25.80V19.63M126.75 25.80V21.19M127.25 25.80V22.45M127.75 25.80V19.06M128.25 25.80V25.14M128.75 25.80V23.09M129.25 25.80V20.64M129.75 25.80V24.75M130.25 25.80V25.03M130.75 25.80V20.38M131.25 25.80V23.63M131.75 25.80V25.10M132.25 25.80V24.31M132.75 25.80V24.47M133.25 25.80V19.08M133.75 25.80V25.14M134.25 25.80V20.18M134.75 25.80V22.61M135.25 25.80V23.11M135.75 25.80V22.52M136.25 25.80V23.92M136.75 25.80V24.22M137.25 25.80V16.32M137.75 25.80V23.49M138.25 25.80V20.48M138.75 25.80V24.53M139.25 25.80V21.43M139.75 25.80V19.34M140.25 25.80V23.07M140.75 25.80V18.76M141.25 25.80V18.06M141.75 25.80V21.31M142.25 25.80V19.52M142.75 25.80V20.07M143.25 25.80V23.21M143.75 25.80V21.47M144.25 25.80V23.71M144.75 25.80V22.88M145.25 25.80V24.26M145.75 25.80V23.32M146.25 25.80V23.53M146.75 25.80V24.25M147.25 25.80V22.93M147.75 25.80V19.92M148.25 25.80V20.09M148.75 25.80V19.38M149.25 25.80V22.79M149.75 25.80V21.53M150.25 25.80V21.94M150.75 25.80V21.83M151.25 25.80V24.55M151.75 25.80V22.00M152.25 25.80V18.89M152.75 25.80V24.59M153.25 25.80V17.13M153.75 25.80V24.03M154.25 25.80V24.85M154.75 25.80V24.97M155.25 25.80V22.75M155.75 25.80V19.05M156.25 25.80V22.63M156.75 25.80V14.59M157.25 25.80V22.40M157.75 25.80V23.67M158.25 25.80V24.03M158.75 25.80V20.19M159.25 25.80V23.59M159.75 25.80V22.64M160.25 25.80V23.71M160.75 25.80V19.01M161.25 25.80V24.11M161.75 25.80V21.56M162.25 25.80V21.98M162.75 25.80V19.57M163.25 25.80V21.48M163.75 25.80V20.22M164.25 25.80V19.95M164.75 25.80V23.66M165.25 25.80V22.49M165.75 25.80V24.43M166.25 25.80V23.38M166.75 25.80V21.53M167.25 25.80V19.76M167.75 25.80V18.53M168.25 25.80V22.64M168.75 25.80V24.29M169.25 25.80V16.96M169.75 25.80V13.96M170.25 25.80V24.97M170.75 25.80V23.59M171.25 25.80V23.27M171.75 25.80V22.21M172.25 25.80V24.77M172.75 25.80V21.97M173.25 25.80V23.61M173.75 25.80V23.56M174.25 25.80V19.80M174.75 25.80V25.17M175.25 25.80V12.64M175.75 25.80V19.77M176.25 25.80V23.60M176.75 25.80V24.63M177.25 25.80V22.72M177.75 25.80V18.53M178.25 25.80V22.16M178.75 25.80V25.20M179.25 25.80V20.01M179.75 25.80V24.41M180.25 25.80V24.23M180.75 25.80V21.89M181.25 25.80V19.45M181.75 25.80V23.22M182.25 25.80V21.99M182.75 25.80V23.81M183.25 25.80V18.56M183.75 25.80V25.25M184.25 25.80V17.73M184.75 25.80V25.27M185.25 25.80V21.83M185.75 25.80V24.03M186.25 25.80V21.54M186.75 25.80V19.03M187.25 25.80V24.33M187.75 25.80V24.17M188.25 25.80V25.00M188.75 25.80V24.09M189.25 25.80V22.70M189.75 25.80V24.15M190.25 25.80V22.16M190.75 25.80V21.69M191.25 25.80V18.67M191.75 25.80V24.82M192.25 25.80V24.61M192.75 25.80V24.36M193.25 25.80V21.74M193.75 25.80V17.96M194.25 25.80V24.50M194.75 25.80V24.66M195.25 25.80V22.63M195.75 25.80V25.00M196.25 25.80V24.43M196.75 25.80V21.93M197.25 25.80V21.01M197.75 25.80V20.19M198.25 25.80V22.05M198.75 25.80V18.74M199.25 25.80V24.62M199.75 25.80V24.73M200.25 25.80V24.88M200.75 25.80V20.24M201.25 25.80V19.88M201.75 25.80V24.14M202.25 25.80V23.94M202.75 25.80V19.93M203.25 25.80V19.83M203.75 25.80V25.10M204.25 25.80V16.96M204.75 25.80V23.24M205.25 25.80V24.26M205.75 25.80V21.21M206.25 25.80V22.70M206.75 25.80V22.72M207.25 25.80V22.04M207.75 25.80V21.82M208.25 25.80V20.71M208.75 25.80V23.67M209.25 25.80V24.55M209.75 25.80V16.35M210.25 25.80V21.87M210.75 25.80V23.31M211.25 25.80V18.94M211.75 25.80V24.93M212.25 25.80V22.95M212.75 25.80V19.92M213.25 25.80V24.86M213.75 25.80V22.81M214.25 25.80V24.51M214.75 25.80V23.77M215.25 25.80V23.85M215.75 25.80V20.16M216.25 25.80V22.51M216.75 25.80V21.77M217.25 25.80V20.78M217.75 25.80V19.40M218.25 25.80V17.21M218.75 25.80V24.07M219.25 25.80V19.73M219.75 25.80V19.77M220.25 25.80V19.91M220.75 25.80V20.33M221.25 25.80V24.79M221.75 25.80V21.13M222.25 25.80V21.71M222.75 25.80V24.32M223.25 25.80V20.23M223.75 25.80V22.04M224.25 25.80V22.86M224.75 25.80V21.82M225.25 25.80V22.04M225.75 25.80V23.55M226.25 25.80V23.20M226.75 25.80V20.19M227.25 25.80V21.76M227.75 25.80V22.45M228.25 25.80V22.06M228.75 25.80V23.26M229.25 25.80V22.84M229.75 25.80V24.31M230.25 25.80V20.82M230.75 25.80V22.11M231.25 25.80V25.25M231.75 25.80V16.81M232.25 25.80V19.55M232.75 25.80V24.01M233.25 25.80V23.02M233.75 25.80V24.06M234.25 25.80V22.51M234.75 25.80V22.35M235.25 25.80V13.99M235.75 25.80V24.65M236.25 25.80V24.76M236.75 25.80V20.27M237.25 25.80V13.29M237.75 25.80V19.02M238.25 25.80V21.37M238.75 25.80V24.74M239.25 25.80V22.18M239.75 25.80V20.12M240.25 25.80V18.75M240.75 25.80V23.37M241.25 25.80V24.82M241.75 25.80V20.89M242.25 25.80V23.18M242.75 25.80V19.94M243.25 25.80V23.53M243.75 25.80V21.20M244.25 25.80V23.97M244.75 25.80V17.54M245.25 25.80V21.55M245.75 25.80V22.28M246.25 25.80V22.22M246.75 25.80V25.23M247.25 25.80V23.10M247.75 25.80V20.38M248.25 25.80V18.55M248.75 25.80V19.93M249.25 25.80V20.91M249.75 25.80V23.18M250.25 25.80V18.87M250.75 25.80V23.18M251.25 25.80V19.11M251.75 25.80V23.14M252.25 25.80V20.36M252.75 25.80V24.27M253.25 25.80V18.14M253.75 25.80V20.81M254.25 25.80V25.00M254.75 25.80V19.03M255.25 25.80V24.92M255.75 25.80V22.57M256.25 25.80V24.72M256.75 25.80V21.86M257.25 25.80V21.12M257.75 25.80V21.82M258.25 25.80V17.28M258.75 25.80V18.97M259.25 25.80V23.09M259.75 25.80V25.05M260.25 25.80V22.38M260.75 25.80V22.59M261.25 25.80V22.10M261.75 25.80V21.13M262.25 25.80V23.32M262.75 25.80V24.90M263.25 25.80V22.45M263.75 25.80V19.44M264.25 25.80V17.43M264.75 25.80V23.45M265.25 25.80V21.46M265.75 25.80V19.68M266.25 25.80V22.70M266.75 25.80V23.59M267.25 25.80V23.67M267.75 25.80V18.29M268.25 25.80V22.50M268.75 25.80V25.12M269.25 25.80V24.00M269.75 25.80V21.19M270.25 25.80V25.16M270.75 25.80V20.08M271.25 25.80V24.48M271.75 25.80V24.87M272.25 25.80V24.36M272.75 25.80V22.39M273.25 25.80V24.66M273.75 25.80V25.01M274.25 25.80V23.56M274.75 25.80V23.28M275.25 25.80V24.34M275.75 25.80V17.10M276.25 25.80V22.71M276.75 25.80V22.60M277.25 25.80V22.93M277.75 25.80V21.17M278.25 25.80V22.39M278.75 25.80V23.27M279.25 25.80V23.59M279.75 25.80V20.08M280.25 25.80V18.73M280.75 25.80V23.23M281.25 25.80V20.05M281.75 25.80V19.62M282.25 25.80V24.79M282.75 25.80V23.82M283.25 25.80V19.57M283.75 25.80V23.11M284.25 25.80V22.36M284.75 25.80V24.57M285.25 25.80V24.56M285.75 25.80V19.66M286.25 25.80V21.34M286.75 25.80V19.68M287.25 25.80V19.00M287.75 25.80V21.67M288.25 25.80V18.41M288.75 25.80V20.84M289.25 25.80V16.14M289.75 25.80V19.62M290.25 25.80V21.76M290.75 25.80V19.18M291.25 25.80V21.97M291.75 25.80V24.70M292.25 25.80V22.42M292.75 25.80V20.30M293.25 25.80V22.39M293.75 25.80V24.51M294.25 25.80V21.50M294.75 25.80V22.16M295.25 25.80V24.17M295.75 25.80V22.89M296.25 25.80V23.51M296.75 25.80V23.35M297.25 25.80V22.72M297.75 25.80V22.75M298.25 25.80V21.93M298.75 25.80V23.61M299.25 25.80V25.21M299.75 25.80V19.12M300.25 25.80V24.16M300.75 25.80V24.28M301.25 25.80V20.25M301.75 25.80V22.62M302.25 25.80V22.54M302.75 25.80V24.51M303.25 25.80V24.06M303.75 25.80V19.67M304.25 25.80V25.22M304.75 25.80V18.37M305.25 25.80V24.38M305.75 25.80V23.26M306.25 25.80V20.51M306.75 25.80V24.88M307.25 25.80V21.07M307.75 25.80V24.12M308.25 25.80V23.75M308.75 25.80V21.53M309.25 25.80V25.01M309.75 25.80V20.99M310.25 25.80V21.80M310.75 25.80V22.64M311.25 25.80V23.68M311.75 25.80V19.12M312.25 25.80V22.74M312.75 25.80V23.69M313.25 25.80V24.72M313.75 25.80V18.12M314.25 25.80V24.92M314.75 25.80V25.06M315.25 25.80V23.70M315.75 25.80V22.22M316.25 25.80V20.57M316.75 25.80V24.88M317.25 25.80V23.01M317.75 25.80V19.38M318.25 25.80V18.76M318.75 25.80V22.91M319.25 25.80V24.80M319.75 25.80V21.69M320.25 25.80V22.53M320.75 25.80V18.58M321.25 25.80V22.71M321.75 25.80V12.24M322.25 25.80V19.12M322.75 25.80V23.70M323.25 25.80V23.04M323.75 25.80V21.98M324.25 25.80V17.74M324.75 25.80V23.50M325.25 25.80V18.26M325.75 25.80V16.61M326.25 25.80V25.04M326.75 25.80V25.21M327.25 25.80V24.79M327.75 25.80V22.19M328.25 25.80V19.34M328.75 25.80V18.34M329.25 25.80V18.11M329.75 25.80V19.90M330.25 25.80V24.71M330.75 25.80V24.99M331.25 25.80V25.23M331.75 25.80V18.76M332.25 25.80V22.10M332.75 25.80V18.64M333.25 25.80V24.74M333.75 25.80V24.28M334.25 25.80V22.95M334.75 25.80V21.32M335.25 25.80V24.06M335.75 25.80V22.60M336.25 25.80V23.76M336.75 25.80V23.80M337.25 25.80V22.18M337.75 25.80V23.24M338.25 25.80V23.64M338.75 25.80V24.72M339.25 25.80V23.83M339.75 25.80V21.27M340.25 25.80V22.13M340.75 25.80V25.27M341.25 25.80V24.95M341.75 25.80V23.47M342.25 25.80V24.86M342.75 25.80V12.90M343.25 25.80V15.99M343.75 25.80V24.76M344.25 25.80V12.47M344.75 25.80V24.20M345.25 25.80V19.33M345.75 25.80V17.73M346.25 25.80V22.93M346.75 25.80V22.08M347.25 25.80V24.18M347.75 25.80V16.37M348.25 25.80V22.29M348.75 25.80V22.80M349.25 25.80V22.36M349.75 25.80V22.35M350.25 25.80V23.85M350.75 25.80V24.42M351.25 25.80V19.40M351.75 25.80V22.18M352.25 25.80V24.73M352.75 25.80V24.41M353.25 25.80V23.16M353.75 25.80V19.44M354.25 25.80V18.87M354.75 25.80V23.00M355.25 25.80V18.97M355.75 25.80V21.41M356.25 25.80V24.40M356.75 25.80V24.76M357.25 25.80V20.32M357.75 25.80V19.74M358.25 25.80V21.94M358.75 25.80V20.69M359.25 25.80V22.33M359.75 25.80V20.60M360.25 25.80V21.37M360.75 25.80V23.09M361.25 25.80V20.83M361.75 25.80V24.03M362.25 25.80V19.23M362.75 25.80V20.84M363.25 25.80V16.83M363.75 25.80V24.97M364.25 25.80V19.68M364.75 25.80V24.04M365.25 25.80V22.22M365.75 25.80V20.76M366.25 25.80V21.61M366.75 25.80V23.58M367.25 25.80V20.15M367.75 25.80V23.54M368.25 25.80V25.18M368.75 25.80V19.56M369.25 25.80V24.25M369.75 25.80V25.18M370.25 25.80V24.10M370.75 25.80V16.12M371.25 25.80V21.65M371.75 25.80V16.09M372.25 25.80V18.70M372.75 25.80V19.18M373.25 25.80V21.88M373.75 25.80V22.04M374.25 25.80V16.53M374.75 25.80V21.68M375.25 25.80V21.66M375.75 25.80V22.59M376.25 25.80V21.34M376.75 25.80V19.34M377.25 25.80V22.38M377.75 25.80V18.97M378.25 25.80V24.59M378.75 25.80V19.28M379.25 25.80V19.71M379.75 25.80V22.13M380.25 25.80V19.94M380.75 25.80V23.69M381.25 25.80V21.59M381.75 25.80V18.66M382.25 25.80V24.13M382.75 25.80V21.59M383.25 25.80V21.63M383.75 25.80V22.10M384.25 25.80V20.56M384.75 25.80V24.83M385.25 25.80V22.50M385.75 25.80V19.52M386.25 25.80V21.83M386.75 25.80V16.68M387.25 25.80V21.82M387.75 25.80V19.68M388.25 25.80V22.53M388.75 25.80V23.63M389.25 25.80V21.79M389.75 25.80V23.97M390.25 25.80V23.13M390.75 25.80V23.87M391.25 25.80V23.23M391.75 25.80V19.80M392.25 25.80V22.79M392.75 25.80V16.57M393.25 25.80V24.57M393.75 25.80V23.61M394.25 25.80V18.44M394.75 25.80V22.61M395.25 25.80V23.34M395.75 25.80V21.90M396.25 25.80V21.93M396.75 25.80V22.97M397.25 25.80V22.13M397.75 25.80V19.96M398.25 25.80V19.03M398.75 25.80V20.55M399.25 25.80V20.09M399.75 25.80V20.16M400.25 25.80V21.40M400.75 25.80V21.17M401.25 25.80V22.83M401.75 25.80V19.26M402.25 25.80V21.04M402.75 25.80V21.49M403.25 25.80V24.68M403.75 25.80V22.91M404.25 25.80V22.28M404.75 25.80V20.20M405.25 25.80V24.85M405.75 25.80V17.75M406.25 25.80V18.10M406.75 25.80V23.41M407.25 25.80V22.80M407.75 25.80V24.60M408.25 25.80V21.83M408.75 25.80V25.06M409.25 25.80V25.04M409.75 25.80V23.51M410.25 25.80V24.78M410.75 25.80V20.25M411.25 25.80V25.00M411.75 25.80V22.06M412.25 25.80V23.96M412.75 25.80V22.40M413.25 25.80V24.84M413.75 25.80V17.21M414.25 25.80V22.49M414.75 25.80V19.27M415.25 25.80V24.01M415.75 25.80V20.95M416.25 25.80V23.51M416.75 25.80V23.17M417.25 25.80V23.78M417.75 25.80V22.99M418.25 25.80V23.53M418.75 25.80V21.58M419.25 25.80V21.72M419.75 25.80V25.06M420.25 25.80V22.00M420.75 25.80V22.91M421.25 25.80V19.68M421.75 25.80V22.84M422.25 25.80V23.50M422.75 25.80V21.27M423.25 25.80V25.28M423.75 25.80V22.98M424.25 25.80V19.79M424.75 25.80V19.24M425.25 25.80V21.75M425.75 25.80V23.19M426.25 25.80V20.16M426.75 25.80V19.95M427.25 25.80V17.04M427.75 25.80V23.60M428.25 25.80V24.93M428.75 25.80V24.39M429.25 25.80V23.54M429.75 25.80V21.57M430.25 25.80V20.86M430.75 25.80V23.59M431.25 25.80V20.88M431.75 25.80V20.16M432.25 25.80V23.24M432.75 25.80V22.28M433.25 25.80V20.86M433.75 25.80V19.06M434.25 25.80V21.36M434.75 25.80V24.42M435.25 25.80V22.40M435.75 25.80V23.81M436.25 25.80V24.90M436.75 25.80V19.40M437.25 25.80V22.61M437.75 25.80V25.05M438.25 25.80V21.88M438.75 25.80V20.58M439.25 25.80V19.06M439.75 25.80V23.98M440.25 25.80V24.14M440.75 25.80V21.28M441.25 25.80V23.73M441.75 25.80V22.36M442.25 25.80V23.51M442.75 25.80V20.77M443.25 25.80V25.09M443.75 25.80V22.01M444.25 25.80V24.47M444.75 25.80V23.37M445.25 25.80V19.40M445.75 25.80V20.60M446.25 25.80V21.92M446.75 25.80V20.25M447.25 25.80V22.43M447.75 25.80V15.51M448.25 25.80V20.18M448.75 25.80V18.93M449.25 25.80V20.09M449.75 25.80V24.78M450.25 25.80V22.13M450.75 25.80V23.36M451.25 25.80V23.90M451.75 25.80V12.89M452.25 25.80V21.19M452.75 25.80V24.78M453.25 25.80V20.98M453.75 25.80V23.09M454.25 25.80V22.14M454.75 25.80V24.36M455.25 25.80V23.34M455.75 25.80V16.27M456.25 25.80V18.06M456.75 25.80V24.64M457.25 25.80V24.63M457.75 25.80V23.50M458.25 25.80V18.07M458.75 25.80V23.76M459.25 25.80V23.95M459.75 25.80V21.86M460.25 25.80V14.84M460.75 25.80V19.38M461.25 25.80V21.83M461.75 25.80V21.91M462.25 25.80V21.83M462.75 25.80V22.87M463.25 25.80V24.59M463.75 25.80V24.39M464.25 25.80V24.08M464.75 25.80V24.92M465.25 25.80V25.17M465.75 25.80V23.13M466.25 25.80V24.56M466.75 25.80V16.38M467.25 25.80V20.52M467.75 25.80V19.54M468.25 25.80V24.78M468.75 25.80V22.70M469.25 25.80V24.14M469.75 25.80V25.12M470.25 25.80V20.55M470.75 25.80V24.80M471.25 25.80V19.89M471.75 25.80V23.01M472.25 25.80V18.57M472.75 25.80V19.14M473.25 25.80V20.31M473.75 25.80V25.03M474.25 25.80V20.85M474.75 25.80V22.52M475.25 25.80V21.17M475.75 25.80V24.89M476.25 25.80V24.94M476.75 25.80V24.22M477.25 25.80V23.90M477.75 25.80V19.61M478.25 25.80V22.88M478.75 25.80V24.67M479.25 25.80V25.20M479.75 25.80V24.25M480.25 25.80V22.14M480.75 25.80V23.81M481.25 25.80V24.54M481.75 25.80V19.66M482.25 25.80V18.99M482.75 25.80V21.36M483.25 25.80V23.76M483.75 25.80V24.33M484.25 25.80V21.91M484.75 25.80V19.90M485.25 25.80V19.69M485.75 25.80V22.37M486.25 25.80V20.87M486.75 25.80V19.40M487.25 25.80V20.23M487.75 25.80V24.18M488.25 25.80V18.96M488.75 25.80V23.87M489.25 25.80V21.36M489.75 25.80V23.84M490.25 25.80V16.02M490.75 25.80V23.59M491.25 25.80V19.60M491.75 25.80V13.58M492.25 25.80V16.63M492.75 25.80V24.24M493.25 25.80V25.09M493.75 25.80V24.88M494.25 25.80V24.12M494.75 25.80V14.06M495.25 25.80V23.88M495.75 25.80V23.70M496.25 25.80V23.60M496.75 25.80V24.12M497.25 25.80V25.01M497.75 25.80V24.32M498.25 25.80V18.54M498.75 25.80V25.09M499.25 25.80V24.63M499.75 25.80V20.70M500.25 25.80V22.67M500.75 25.80V24.48M501.25 25.80V18.58M501.75 25.80V24.27M502.25 25.80V24.71M502.75 25.80V24.25M503.25 25.80V23.60M503.75 25.80V17.99M504.25 25.80V23.00M504.75 25.80V22.21M505.25 25.80V25.18M505.75 25.80V22.57M506.25 25.80V25.10M506.75 25.80V22.49M507.25 25.80V23.16M507.75 25.80V24.52M508.25 25.80V21.43M508.75 25.80V22.46M509.25 25.80V23.34M509.75 25.80V20.54M510.25 25.80V21.11M510.75 25.80V22.85M511.25 25.80V23.31M511.75 25.80V22.25M512.25 25.80V24.43M512.75 25.80V25.09M513.25 25.80V21.62M513.75 25.80V22.86M514.25 25.80V24.33M514.75 25.80V25.06M515.25 25.80V23.63M515.75 25.80V24.39M516.25 25.80V24.32M516.75 25.80V25.01M517.25 25.80V19.88M517.75 25.80V23.59M518.25 25.80V25.17M518.75 25.80V18.62M519.25 25.80V23.01M519.75 25.80V23.50M520.25 25.80V20.17M520.75 25.80V23.38M521.25 25.80V24.23M521.75 25.80V22.92M522.25 25.80V20.28M522.75 25.80V24.92M523.25 25.80V18.74M523.75 25.80V19.96M524.25 25.80V21.84M524.75 25.80V23.18M525.25 25.80V23.34M525.75 25.80V19.71M526.25 25.80V24.82M526.75 25.80V20.98M527.25 25.80V19.07M527.75 25.80V22.91M528.25 25.80V16.34M528.75 25.80V13.80M529.25 25.80V24.26M529.75 25.80V22.58M530.25 25.80V21.76M530.75 25.80V24.79M531.25 25.80V23.73M531.75 25.80V23.07M532.25 25.80V22.37M532.75 25.80V23.22M533.25 25.80V23.66M533.75 25.80V22.83M534.25 25.80V18.60M534.75 25.80V25.18M535.25 25.80V25.07M535.75 25.80V22.87M536.25 25.80V24.84M536.75 25.80V17.99M537.25 25.80V20.72M537.75 25.80V21.54M538.25 25.80V20.45M538.75 25.80V22.61M539.25 25.80V17.04M539.75 25.80V21.74M540.25 25.80V23.22M540.75 25.80V24.36M541.25 25.80V22.76M541.75 25.80V21.90M542.25 25.80V24.60M542.75 25.80V25.02M543.25 25.80V19.50M543.75 25.80V19.95M544.25 25.80V22.66M544.75 25.80V21.42M545.25 25.80V18.61M545.75 25.80V23.16M546.25 25.80V19.95M546.75 25.80V19.02M547.25 25.80V24.30M547.75 25.80V24.10M548.25 25.80V22.03M548.75 25.80V23.96M549.25 25.80V25.01M549.75 25.80V23.67M550.25 25.80V18.50M550.75 25.80V16.18M551.25 25.80V20.96M551.75 25.80V20.42M552.25 25.80V23.85M552.75 25.80V23.14M553.25 25.80V21.52M553.75 25.80V19.23" stroke="#00a9ce" stroke-width="0.5" fill="none" opacity="0.62"/><path d="M0.25 99.70V100.42M0.75 99.70V100.56M1.25 99.70V101.55M1.75 99.70V100.99M2.25 99.70V103.13M2.75 99.70V100.70M3.25 99.70V104.14M3.75 99.70V106.04M4.25 99.70V100.91M4.75 99.70V100.88M5.25 99.70V104.89M5.75 99.70V101.14M6.25 99.70V100.25M6.75 99.70V100.73M7.25 99.70V102.57M7.75 99.70V100.28M8.25 99.70V105.01M8.75 99.70V101.97M9.25 99.70V102.77M9.75 99.70V101.14M10.25 99.70V102.24M10.75 99.70V100.94M11.25 99.70V101.00M11.75 99.70V101.67M12.25 99.70V100.46M12.75 99.70V102.82M13.25 99.70V105.19M13.75 99.70V102.06M14.25 99.70V105.85M14.75 99.70V103.76M15.25 99.70V101.81M15.75 99.70V104.48M16.25 99.70V100.76M16.75 99.70V102.19M17.25 99.70V100.77M17.75 99.70V100.70M18.25 99.70V104.47M18.75 99.70V101.81M19.25 99.70V101.10M19.75 99.70V103.66M20.25 99.70V101.04M20.75 99.70V100.42M21.25 99.70V109.41M21.75 99.70V103.31M22.25 99.70V101.99M22.75 99.70V100.71M23.25 99.70V103.57M23.75 99.70V100.87M24.25 99.70V104.55M24.75 99.70V103.76M25.25 99.70V101.35M25.75 99.70V103.47M26.25 99.70V102.48M26.75 99.70V100.36M27.25 99.70V103.22M27.75 99.70V100.47M28.25 99.70V103.65M28.75 99.70V104.50M29.25 99.70V105.66M29.75 99.70V102.47M30.25 99.70V102.43M30.75 99.70V100.78M31.25 99.70V100.25M31.75 99.70V105.34M32.25 99.70V100.67M32.75 99.70V102.98M33.25 99.70V103.64M33.75 99.70V103.79M34.25 99.70V101.35M34.75 99.70V100.92M35.25 99.70V102.88M35.75 99.70V101.48M36.25 99.70V103.93M36.75 99.70V102.34M37.25 99.70V103.14M37.75 99.70V102.80M38.25 99.70V100.25M38.75 99.70V100.59M39.25 99.70V105.85M39.75 99.70V101.18M40.25 99.70V101.07M40.75 99.70V103.51M41.25 99.70V102.37M41.75 99.70V102.02M42.25 99.70V100.97M42.75 99.70V104.89M43.25 99.70V108.95M43.75 99.70V101.97M44.25 99.70V102.94M44.75 99.70V100.97M45.25 99.70V100.91M45.75 99.70V101.87M46.25 99.70V103.78M46.75 99.70V100.78M47.25 99.70V102.73M47.75 99.70V102.71M48.25 99.70V102.62M48.75 99.70V102.04M49.25 99.70V100.77M49.75 99.70V100.83M50.25 99.70V101.01M50.75 99.70V102.40M51.25 99.70V103.68M51.75 99.70V100.50M52.25 99.70V102.19M52.75 99.70V101.26M53.25 99.70V100.51M53.75 99.70V100.38M54.25 99.70V103.12M54.75 99.70V101.27M55.25 99.70V100.90M55.75 99.70V104.32M56.25 99.70V103.31M56.75 99.70V106.98M57.25 99.70V101.16M57.75 99.70V103.35M58.25 99.70V100.56M58.75 99.70V105.89M59.25 99.70V100.92M59.75 99.70V101.04M60.25 99.70V100.24M60.75 99.70V103.44M61.25 99.70V100.90M61.75 99.70V103.01M62.25 99.70V100.76M62.75 99.70V100.49M63.25 99.70V100.79M63.75 99.70V102.42M64.25 99.70V105.61M64.75 99.70V102.50M65.25 99.70V102.42M65.75 99.70V103.52M66.25 99.70V100.23M66.75 99.70V100.39M67.25 99.70V103.00M67.75 99.70V102.64M68.25 99.70V105.81M68.75 99.70V105.10M69.25 99.70V102.54M69.75 99.70V106.25M70.25 99.70V101.49M70.75 99.70V103.18M71.25 99.70V100.66M71.75 99.70V100.65M72.25 99.70V102.84M72.75 99.70V101.76M73.25 99.70V101.16M73.75 99.70V101.88M74.25 99.70V101.35M74.75 99.70V100.40M75.25 99.70V103.69M75.75 99.70V101.68M76.25 99.70V103.90M76.75 99.70V101.86M77.25 99.70V103.72M77.75 99.70V105.42M78.25 99.70V100.49M78.75 99.70V108.54M79.25 99.70V102.48M79.75 99.70V102.58M80.25 99.70V107.50M80.75 99.70V103.58M81.25 99.70V103.19M81.75 99.70V100.92M82.25 99.70V100.39M82.75 99.70V103.14M83.25 99.70V101.03M83.75 99.70V100.23M84.25 99.70V100.25M84.75 99.70V103.89M85.25 99.70V100.31M85.75 99.70V100.37M86.25 99.70V100.77M86.75 99.70V101.30M87.25 99.70V100.21M87.75 99.70V102.61M88.25 99.70V103.04M88.75 99.70V103.90M89.25 99.70V103.24M89.75 99.70V100.59M90.25 99.70V101.18M90.75 99.70V100.81M91.25 99.70V103.51M91.75 99.70V103.70M92.25 99.70V101.54M92.75 99.70V101.93M93.25 99.70V100.65M93.75 99.70V100.57M94.25 99.70V101.72M94.75 99.70V100.20M95.25 99.70V101.19M95.75 99.70V101.80M96.25 99.70V103.63M96.75 99.70V102.01M97.25 99.70V101.60M97.75 99.70V100.82M98.25 99.70V101.68M98.75 99.70V103.72M99.25 99.70V100.66M99.75 99.70V103.43M100.25 99.70V101.27M100.75 99.70V100.26M101.25 99.70V103.34M101.75 99.70V103.09M102.25 99.70V103.44M102.75 99.70V100.97M103.25 99.70V100.68M103.75 99.70V102.53M104.25 99.70V102.97M104.75 99.70V100.66M105.25 99.70V103.59M105.75 99.70V102.13M106.25 99.70V101.41M106.75 99.70V100.62M107.25 99.70V101.97M107.75 99.70V100.21M108.25 99.70V100.34M108.75 99.70V100.88M109.25 99.70V101.33M109.75 99.70V100.98M110.25 99.70V102.42M110.75 99.70V100.25M111.25 99.70V101.12M111.75 99.70V101.12M112.25 99.70V100.92M112.75 99.70V100.70M113.25 99.70V105.88M113.75 99.70V100.37M114.25 99.70V100.62M114.75 99.70V101.51M115.25 99.70V102.49M115.75 99.70V100.38M116.25 99.70V100.90M116.75 99.70V102.78M117.25 99.70V102.89M117.75 99.70V100.85M118.25 99.70V103.28M118.75 99.70V102.87M119.25 99.70V101.00M119.75 99.70V100.32M120.25 99.70V104.00M120.75 99.70V101.08M121.25 99.70V100.49M121.75 99.70V101.28M122.25 99.70V100.39M122.75 99.70V102.77M123.25 99.70V102.03M123.75 99.70V101.17M124.25 99.70V102.69M124.75 99.70V100.76M125.25 99.70V101.61M125.75 99.70V106.10M126.25 99.70V103.22M126.75 99.70V102.28M127.25 99.70V102.68M127.75 99.70V100.35M128.25 99.70V104.54M128.75 99.70V101.93M129.25 99.70V103.29M129.75 99.70V101.08M130.25 99.70V102.74M130.75 99.70V101.73M131.25 99.70V101.48M131.75 99.70V102.71M132.25 99.70V102.19M132.75 99.70V106.82M133.25 99.70V104.30M133.75 99.70V101.10M134.25 99.70V100.55M134.75 99.70V103.22M135.25 99.70V102.16M135.75 99.70V102.05M136.25 99.70V100.59M136.75 99.70V100.63M137.25 99.70V100.52M137.75 99.70V100.79M138.25 99.70V100.31M138.75 99.70V100.92M139.25 99.70V100.52M139.75 99.70V100.65M140.25 99.70V101.88M140.75 99.70V103.69M141.25 99.70V106.90M141.75 99.70V100.64M142.25 99.70V101.10M142.75 99.70V100.49M143.25 99.70V105.23M143.75 99.70V100.93M144.25 99.70V100.25M144.75 99.70V102.67M145.25 99.70V102.07M145.75 99.70V100.25M146.25 99.70V100.23M146.75 99.70V104.66M147.25 99.70V100.30M147.75 99.70V102.09M148.25 99.70V103.37M148.75 99.70V102.40M149.25 99.70V103.33M149.75 99.70V102.80M150.25 99.70V100.68M150.75 99.70V100.76M151.25 99.70V103.11M151.75 99.70V100.42M152.25 99.70V101.92M152.75 99.70V101.36M153.25 99.70V100.68M153.75 99.70V106.04M154.25 99.70V100.87M154.75 99.70V102.43M155.25 99.70V106.04M155.75 99.70V100.44M156.25 99.70V102.11M156.75 99.70V100.29M157.25 99.70V101.31M157.75 99.70V103.53M158.25 99.70V106.13M158.75 99.70V103.20M159.25 99.70V102.92M159.75 99.70V101.17M160.25 99.70V106.08M160.75 99.70V103.33M161.25 99.70V103.37M161.75 99.70V100.93M162.25 99.70V107.76M162.75 99.70V102.16M163.25 99.70V105.54M163.75 99.70V100.65M164.25 99.70V100.20M164.75 99.70V100.42M165.25 99.70V105.42M165.75 99.70V103.10M166.25 99.70V100.27M166.75 99.70V103.57M167.25 99.70V103.70M167.75 99.70V101.24M168.25 99.70V102.79M168.75 99.70V102.82M169.25 99.70V103.21M169.75 99.70V104.75M170.25 99.70V101.19M170.75 99.70V101.45M171.25 99.70V100.80M171.75 99.70V101.18M172.25 99.70V100.21M172.75 99.70V100.69M173.25 99.70V101.37M173.75 99.70V103.20M174.25 99.70V103.13M174.75 99.70V103.38M175.25 99.70V100.77M175.75 99.70V101.17M176.25 99.70V107.55M176.75 99.70V100.42M177.25 99.70V100.86M177.75 99.70V106.01M178.25 99.70V100.78M178.75 99.70V104.10M179.25 99.70V100.99M179.75 99.70V102.49M180.25 99.70V101.30M180.75 99.70V101.50M181.25 99.70V100.97M181.75 99.70V101.92M182.25 99.70V100.97M182.75 99.70V101.16M183.25 99.70V101.36M183.75 99.70V102.82M184.25 99.70V100.42M184.75 99.70V102.29M185.25 99.70V101.03M185.75 99.70V100.81M186.25 99.70V101.80M186.75 99.70V101.84M187.25 99.70V106.02M187.75 99.70V101.11M188.25 99.70V101.08M188.75 99.70V100.40M189.25 99.70V101.45M189.75 99.70V103.30M190.25 99.70V100.59M190.75 99.70V102.60M191.25 99.70V101.78M191.75 99.70V100.75M192.25 99.70V101.33M192.75 99.70V103.49M193.25 99.70V100.93M193.75 99.70V100.33M194.25 99.70V102.44M194.75 99.70V100.33M195.25 99.70V103.35M195.75 99.70V100.69M196.25 99.70V103.30M196.75 99.70V103.36M197.25 99.70V100.26M197.75 99.70V107.21M198.25 99.70V105.62M198.75 99.70V100.82M199.25 99.70V105.01M199.75 99.70V100.66M200.25 99.70V103.12M200.75 99.70V101.34M201.25 99.70V101.58M201.75 99.70V100.28M202.25 99.70V102.79M202.75 99.70V100.48M203.25 99.70V102.84M203.75 99.70V103.39M204.25 99.70V100.25M204.75 99.70V104.30M205.25 99.70V101.01M205.75 99.70V100.78M206.25 99.70V105.59M206.75 99.70V100.96M207.25 99.70V103.52M207.75 99.70V101.87M208.25 99.70V100.24M208.75 99.70V100.98M209.25 99.70V100.56M209.75 99.70V103.75M210.25 99.70V102.71M210.75 99.70V101.84M211.25 99.70V101.79M211.75 99.70V103.40M212.25 99.70V102.64M212.75 99.70V101.81M213.25 99.70V106.07M213.75 99.70V102.38M214.25 99.70V100.43M214.75 99.70V100.28M215.25 99.70V102.76M215.75 99.70V101.97M216.25 99.70V100.93M216.75 99.70V102.63M217.25 99.70V100.63M217.75 99.70V101.15M218.25 99.70V108.37M218.75 99.70V100.79M219.25 99.70V102.33M219.75 99.70V102.63M220.25 99.70V100.87M220.75 99.70V104.95M221.25 99.70V100.37M221.75 99.70V101.64M222.25 99.70V101.06M222.75 99.70V104.88M223.25 99.70V100.56M223.75 99.70V100.74M224.25 99.70V102.76M224.75 99.70V101.91M225.25 99.70V100.85M225.75 99.70V100.43M226.25 99.70V101.90M226.75 99.70V103.29M227.25 99.70V102.07M227.75 99.70V102.98M228.25 99.70V101.07M228.75 99.70V102.56M229.25 99.70V105.58M229.75 99.70V100.25M230.25 99.70V100.38M230.75 99.70V100.37M231.25 99.70V100.69M231.75 99.70V102.74M232.25 99.70V100.57M232.75 99.70V104.96M233.25 99.70V101.91M233.75 99.70V100.39M234.25 99.70V100.89M234.75 99.70V107.37M235.25 99.70V101.66M235.75 99.70V100.23M236.25 99.70V100.46M236.75 99.70V100.88M237.25 99.70V102.60M237.75 99.70V101.85M238.25 99.70V100.71M238.75 99.70V101.14M239.25 99.70V104.89M239.75 99.70V101.52M240.25 99.70V102.02M240.75 99.70V103.21M241.25 99.70V101.58M241.75 99.70V101.84M242.25 99.70V102.31M242.75 99.70V100.69M243.25 99.70V104.95M243.75 99.70V101.51M244.25 99.70V101.11M244.75 99.70V100.93M245.25 99.70V101.38M245.75 99.70V101.81M246.25 99.70V102.57M246.75 99.70V100.72M247.25 99.70V102.67M247.75 99.70V102.58M248.25 99.70V103.21M248.75 99.70V100.30M249.25 99.70V102.63M249.75 99.70V100.50M250.25 99.70V100.51M250.75 99.70V103.17M251.25 99.70V103.73M251.75 99.70V102.02M252.25 99.70V102.55M252.75 99.70V100.68M253.25 99.70V106.13M253.75 99.70V101.08M254.25 99.70V105.42M254.75 99.70V100.70M255.25 99.70V103.32M255.75 99.70V100.46M256.25 99.70V103.05M256.75 99.70V102.68M257.25 99.70V100.75M257.75 99.70V101.32M258.25 99.70V100.96M258.75 99.70V101.86M259.25 99.70V100.78M259.75 99.70V100.23M260.25 99.70V103.55M260.75 99.70V101.10M261.25 99.70V101.15M261.75 99.70V101.60M262.25 99.70V100.56M262.75 99.70V101.00M263.25 99.70V103.73M263.75 99.70V103.58M264.25 99.70V101.38M264.75 99.70V101.22M265.25 99.70V102.46M265.75 99.70V100.87M266.25 99.70V103.69M266.75 99.70V101.16M267.25 99.70V102.94M267.75 99.70V100.92M268.25 99.70V101.44M268.75 99.70V100.38M269.25 99.70V100.72M269.75 99.70V100.93M270.25 99.70V101.97M270.75 99.70V102.17M271.25 99.70V103.35M271.75 99.70V101.60M272.25 99.70V106.20M272.75 99.70V102.44M273.25 99.70V102.96M273.75 99.70V100.96M274.25 99.70V102.55M274.75 99.70V100.26M275.25 99.70V105.11M275.75 99.70V101.47M276.25 99.70V102.90M276.75 99.70V100.69M277.25 99.70V100.44M277.75 99.70V103.79M278.25 99.70V103.72M278.75 99.70V101.27M279.25 99.70V103.10M279.75 99.70V101.41M280.25 99.70V102.47M280.75 99.70V100.40M281.25 99.70V100.82M281.75 99.70V101.15M282.25 99.70V101.63M282.75 99.70V100.24M283.25 99.70V101.15M283.75 99.70V105.36M284.25 99.70V102.00M284.75 99.70V102.76M285.25 99.70V101.00M285.75 99.70V100.56M286.25 99.70V100.61M286.75 99.70V100.28M287.25 99.70V101.74M287.75 99.70V100.52M288.25 99.70V100.93M288.75 99.70V101.05M289.25 99.70V101.42M289.75 99.70V103.17M290.25 99.70V102.36M290.75 99.70V103.65M291.25 99.70V104.63M291.75 99.70V103.70M292.25 99.70V101.64M292.75 99.70V100.47M293.25 99.70V102.03M293.75 99.70V103.37M294.25 99.70V100.66M294.75 99.70V100.21M295.25 99.70V100.81M295.75 99.70V100.76M296.25 99.70V100.36M296.75 99.70V102.95M297.25 99.70V100.95M297.75 99.70V103.28M298.25 99.70V108.97M298.75 99.70V101.53M299.25 99.70V102.21M299.75 99.70V102.09M300.25 99.70V101.07M300.75 99.70V107.53M301.25 99.70V103.99M301.75 99.70V101.12M302.25 99.70V100.28M302.75 99.70V106.00M303.25 99.70V102.52M303.75 99.70V101.64M304.25 99.70V101.95M304.75 99.70V101.51M305.25 99.70V100.79M305.75 99.70V100.34M306.25 99.70V103.33M306.75 99.70V101.13M307.25 99.70V101.24M307.75 99.70V100.71M308.25 99.70V102.01M308.75 99.70V102.37M309.25 99.70V101.45M309.75 99.70V101.39M310.25 99.70V100.38M310.75 99.70V100.42M311.25 99.70V100.89M311.75 99.70V101.75M312.25 99.70V102.83M312.75 99.70V100.28M313.25 99.70V101.08M313.75 99.70V105.30M314.25 99.70V100.51M314.75 99.70V100.65M315.25 99.70V105.93M315.75 99.70V100.95M316.25 99.70V102.11M316.75 99.70V100.92M317.25 99.70V102.76M317.75 99.70V103.13M318.25 99.70V102.92M318.75 99.70V104.52M319.25 99.70V100.91M319.75 99.70V100.82M320.25 99.70V101.49M320.75 99.70V100.82M321.25 99.70V102.52M321.75 99.70V103.31M322.25 99.70V106.45M322.75 99.70V103.60M323.25 99.70V105.53M323.75 99.70V104.02M324.25 99.70V103.16M324.75 99.70V105.70M325.25 99.70V103.12M325.75 99.70V100.30M326.25 99.70V102.04M326.75 99.70V103.32M327.25 99.70V107.46M327.75 99.70V101.07M328.25 99.70V100.69M328.75 99.70V100.84M329.25 99.70V100.66M329.75 99.70V101.33M330.25 99.70V101.44M330.75 99.70V102.07M331.25 99.70V103.68M331.75 99.70V100.82M332.25 99.70V102.80M332.75 99.70V100.64M333.25 99.70V100.90M333.75 99.70V104.10M334.25 99.70V100.97M334.75 99.70V101.53M335.25 99.70V100.65M335.75 99.70V104.60M336.25 99.70V102.15M336.75 99.70V103.37M337.25 99.70V102.71M337.75 99.70V101.42M338.25 99.70V100.54M338.75 99.70V100.44M339.25 99.70V102.98M339.75 99.70V100.51M340.25 99.70V103.44M340.75 99.70V100.63M341.25 99.70V101.07M341.75 99.70V101.05M342.25 99.70V100.45M342.75 99.70V102.12M343.25 99.70V101.79M343.75 99.70V103.44M344.25 99.70V101.18M344.75 99.70V101.16M345.25 99.70V101.26M345.75 99.70V102.60M346.25 99.70V105.80M346.75 99.70V100.55M347.25 99.70V101.21M347.75 99.70V101.36M348.25 99.70V100.29M348.75 99.70V100.58M349.25 99.70V103.78M349.75 99.70V101.12M350.25 99.70V103.50M350.75 99.70V104.65M351.25 99.70V102.21M351.75 99.70V103.66M352.25 99.70V101.77M352.75 99.70V103.05M353.25 99.70V101.44M353.75 99.70V103.68M354.25 99.70V100.61M354.75 99.70V103.78M355.25 99.70V108.77M355.75 99.70V102.47M356.25 99.70V100.44M356.75 99.70V101.15M357.25 99.70V100.25M357.75 99.70V102.52M358.25 99.70V100.43M358.75 99.70V100.63M359.25 99.70V100.76M359.75 99.70V102.12M360.25 99.70V100.76M360.75 99.70V100.74M361.25 99.70V100.82M361.75 99.70V100.82M362.25 99.70V103.47M362.75 99.70V103.73M363.25 99.70V102.09M363.75 99.70V100.83M364.25 99.70V103.80M364.75 99.70V101.11M365.25 99.70V100.55M365.75 99.70V102.76M366.25 99.70V101.18M366.75 99.70V108.26M367.25 99.70V102.21M367.75 99.70V100.89M368.25 99.70V103.77M368.75 99.70V101.74M369.25 99.70V101.28M369.75 99.70V100.68M370.25 99.70V101.15M370.75 99.70V100.40M371.25 99.70V100.85M371.75 99.70V102.03M372.25 99.70V106.13M372.75 99.70V102.30M373.25 99.70V101.27M373.75 99.70V102.45M374.25 99.70V100.90M374.75 99.70V104.84M375.25 99.70V100.50M375.75 99.70V102.89M376.25 99.70V100.60M376.75 99.70V109.25M377.25 99.70V102.55M377.75 99.70V101.61M378.25 99.70V101.69M378.75 99.70V100.35M379.25 99.70V101.11M379.75 99.70V104.09M380.25 99.70V104.87M380.75 99.70V102.03M381.25 99.70V103.85M381.75 99.70V100.79M382.25 99.70V102.48M382.75 99.70V100.43M383.25 99.70V100.58M383.75 99.70V101.82M384.25 99.70V102.91M384.75 99.70V102.39M385.25 99.70V102.55M385.75 99.70V100.34M386.25 99.70V103.49M386.75 99.70V100.95M387.25 99.70V102.85M387.75 99.70V100.77M388.25 99.70V101.74M388.75 99.70V104.98M389.25 99.70V103.43M389.75 99.70V100.28M390.25 99.70V103.74M390.75 99.70V100.88M391.25 99.70V102.27M391.75 99.70V100.70M392.25 99.70V103.18M392.75 99.70V102.52M393.25 99.70V100.58M393.75 99.70V102.62M394.25 99.70V102.04M394.75 99.70V103.64M395.25 99.70V102.64M395.75 99.70V100.27M396.25 99.70V103.32M396.75 99.70V100.36M397.25 99.70V103.75M397.75 99.70V102.29M398.25 99.70V101.10M398.75 99.70V102.30M399.25 99.70V103.59M399.75 99.70V103.06M400.25 99.70V101.93M400.75 99.70V100.45M401.25 99.70V102.87M401.75 99.70V102.31M402.25 99.70V103.59M402.75 99.70V104.34M403.25 99.70V100.38M403.75 99.70V102.53M404.25 99.70V103.04M404.75 99.70V101.49M405.25 99.70V101.81M405.75 99.70V102.42M406.25 99.70V100.83M406.75 99.70V101.12M407.25 99.70V101.14M407.75 99.70V100.73M408.25 99.70V103.38M408.75 99.70V107.49M409.25 99.70V100.73M409.75 99.70V102.42M410.25 99.70V102.69M410.75 99.70V101.14M411.25 99.70V102.27M411.75 99.70V100.75M412.25 99.70V101.55M412.75 99.70V103.64M413.25 99.70V102.17M413.75 99.70V101.37M414.25 99.70V102.49M414.75 99.70V103.04M415.25 99.70V105.83M415.75 99.70V101.30M416.25 99.70V102.20M416.75 99.70V102.91M417.25 99.70V100.53M417.75 99.70V103.75M418.25 99.70V101.22M418.75 99.70V102.73M419.25 99.70V100.22M419.75 99.70V103.12M420.25 99.70V100.43M420.75 99.70V102.00M421.25 99.70V102.69M421.75 99.70V103.84M422.25 99.70V100.97M422.75 99.70V103.48M423.25 99.70V103.49M423.75 99.70V102.67M424.25 99.70V102.41M424.75 99.70V101.98M425.25 99.70V101.38M425.75 99.70V101.94M426.25 99.70V101.88M426.75 99.70V102.33M427.25 99.70V102.14M427.75 99.70V101.89M428.25 99.70V100.86M428.75 99.70V100.47M429.25 99.70V101.99M429.75 99.70V101.08M430.25 99.70V102.14M430.75 99.70V102.89M431.25 99.70V102.67M431.75 99.70V103.60M432.25 99.70V105.19M432.75 99.70V102.55M433.25 99.70V100.21M433.75 99.70V103.73M434.25 99.70V101.12M434.75 99.70V101.58M435.25 99.70V101.28M435.75 99.70V102.59M436.25 99.70V101.11M436.75 99.70V101.14M437.25 99.70V102.65M437.75 99.70V101.52M438.25 99.70V101.60M438.75 99.70V102.15M439.25 99.70V100.75M439.75 99.70V104.62M440.25 99.70V106.15M440.75 99.70V102.42M441.25 99.70V101.04M441.75 99.70V102.24M442.25 99.70V102.32M442.75 99.70V101.41M443.25 99.70V100.62M443.75 99.70V101.19M444.25 99.70V100.45M444.75 99.70V100.33M445.25 99.70V107.09M445.75 99.70V101.92M446.25 99.70V100.62M446.75 99.70V102.59M447.25 99.70V102.19M447.75 99.70V103.07M448.25 99.70V101.31M448.75 99.70V103.13M449.25 99.70V102.46M449.75 99.70V101.63M450.25 99.70V101.06M450.75 99.70V102.69M451.25 99.70V103.51M451.75 99.70V102.99M452.25 99.70V101.04M452.75 99.70V103.59M453.25 99.70V100.67M453.75 99.70V101.36M454.25 99.70V100.39M454.75 99.70V102.25M455.25 99.70V105.98M455.75 99.70V101.50M456.25 99.70V102.13M456.75 99.70V101.09M457.25 99.70V101.32M457.75 99.70V103.21M458.25 99.70V100.57M458.75 99.70V101.21M459.25 99.70V100.49M459.75 99.70V102.32M460.25 99.70V100.84M460.75 99.70V103.08M461.25 99.70V103.28M461.75 99.70V103.67M462.25 99.70V100.72M462.75 99.70V103.40M463.25 99.70V102.25M463.75 99.70V108.74M464.25 99.70V100.53M464.75 99.70V100.61M465.25 99.70V105.13M465.75 99.70V100.69M466.25 99.70V105.31M466.75 99.70V102.56M467.25 99.70V100.65M467.75 99.70V101.03M468.25 99.70V100.50M468.75 99.70V103.50M469.25 99.70V100.29M469.75 99.70V100.35M470.25 99.70V103.24M470.75 99.70V100.68M471.25 99.70V100.83M471.75 99.70V103.05M472.25 99.70V105.74M472.75 99.70V100.40M473.25 99.70V100.94M473.75 99.70V104.26M474.25 99.70V102.19M474.75 99.70V101.74M475.25 99.70V100.98M475.75 99.70V100.78M476.25 99.70V107.76M476.75 99.70V100.31M477.25 99.70V100.34M477.75 99.70V100.51M478.25 99.70V101.54M478.75 99.70V100.87M479.25 99.70V101.06M479.75 99.70V100.83M480.25 99.70V100.73M480.75 99.70V108.11M481.25 99.70V100.88M481.75 99.70V100.26M482.25 99.70V101.13M482.75 99.70V103.83M483.25 99.70V100.70M483.75 99.70V100.88M484.25 99.70V102.49M484.75 99.70V101.65M485.25 99.70V103.77M485.75 99.70V100.56M486.25 99.70V109.67M486.75 99.70V100.97M487.25 99.70V102.90M487.75 99.70V100.73M488.25 99.70V100.37M488.75 99.70V100.69M489.25 99.70V100.67M489.75 99.70V102.67M490.25 99.70V101.43M490.75 99.70V100.28M491.25 99.70V100.43M491.75 99.70V101.84M492.25 99.70V101.49M492.75 99.70V100.98M493.25 99.70V101.17M493.75 99.70V101.32M494.25 99.70V100.52M494.75 99.70V100.53M495.25 99.70V100.89M495.75 99.70V100.99M496.25 99.70V103.72M496.75 99.70V103.18M497.25 99.70V102.44M497.75 99.70V100.38M498.25 99.70V101.25M498.75 99.70V103.69M499.25 99.70V101.28M499.75 99.70V100.99M500.25 99.70V100.82M500.75 99.70V102.89M501.25 99.70V103.06M501.75 99.70V106.42M502.25 99.70V107.76M502.75 99.70V100.56M503.25 99.70V106.20M503.75 99.70V101.63M504.25 99.70V100.98M504.75 99.70V102.84M505.25 99.70V103.69M505.75 99.70V103.46M506.25 99.70V100.89M506.75 99.70V100.84M507.25 99.70V103.67M507.75 99.70V100.38M508.25 99.70V103.51M508.75 99.70V103.74M509.25 99.70V104.44M509.75 99.70V103.37M510.25 99.70V103.77M510.75 99.70V103.07M511.25 99.70V100.83M511.75 99.70V100.96M512.25 99.70V102.13M512.75 99.70V101.18M513.25 99.70V100.76M513.75 99.70V103.38M514.25 99.70V102.42M514.75 99.70V100.48M515.25 99.70V100.31M515.75 99.70V102.38M516.25 99.70V100.98M516.75 99.70V102.38M517.25 99.70V101.37M517.75 99.70V102.29M518.25 99.70V100.25M518.75 99.70V101.71M519.25 99.70V101.00M519.75 99.70V100.44M520.25 99.70V102.47M520.75 99.70V102.00M521.25 99.70V101.50M521.75 99.70V105.89M522.25 99.70V101.05M522.75 99.70V101.01M523.25 99.70V101.04M523.75 99.70V103.29M524.25 99.70V104.68M524.75 99.70V105.85M525.25 99.70V100.86M525.75 99.70V102.95M526.25 99.70V103.10M526.75 99.70V106.13M527.25 99.70V100.39M527.75 99.70V104.64M528.25 99.70V100.23M528.75 99.70V103.44M529.25 99.70V103.62M529.75 99.70V101.14M530.25 99.70V102.13M530.75 99.70V102.59M531.25 99.70V100.44M531.75 99.70V104.45M532.25 99.70V104.37M532.75 99.70V100.29M533.25 99.70V101.01M533.75 99.70V103.13M534.25 99.70V100.94M534.75 99.70V100.33M535.25 99.70V103.25M535.75 99.70V102.74M536.25 99.70V100.67M536.75 99.70V100.78M537.25 99.70V102.50M537.75 99.70V105.14M538.25 99.70V101.26M538.75 99.70V100.72M539.25 99.70V102.67M539.75 99.70V101.26M540.25 99.70V100.63M540.75 99.70V101.95M541.25 99.70V103.30M541.75 99.70V103.00M542.25 99.70V109.05M542.75 99.70V100.86M543.25 99.70V102.61M543.75 99.70V101.61M544.25 99.70V100.76M544.75 99.70V103.07M545.25 99.70V102.75M545.75 99.70V102.08M546.25 99.70V102.54M546.75 99.70V103.04M547.25 99.70V100.28M547.75 99.70V103.17M548.25 99.70V100.68M548.75 99.70V101.52M549.25 99.70V103.74M549.75 99.70V105.19M550.25 99.70V101.84M550.75 99.70V101.17M551.25 99.70V101.98M551.75 99.70V101.09M552.25 99.70V101.54M552.75 99.70V101.15M553.25 99.70V105.35M553.75 99.70V100.51" stroke="#00a9ce" stroke-width="0.5" fill="none" opacity="0.62"/><rect x="543.50" y="3.60" width="0.9" height="24" fill="#00a9ce" opacity=".75"/></svg>
<div class="a" style="left:479.60px;top:468.00px;width:1113.20px;height:76.60px;background:#fff;border:0.60px solid #e3e8eb;box-sizing:border-box;"></div>
<svg class="a" style="left:479.60px;top:468.00px;width:1113.20px;height:76.60px" viewBox="0 0 556.60 38.30" preserveAspectRatio="none"><rect x="0" y="11.50" width="556.60" height="6.80" fill="#00a9ce"/><path d="M0.25 11.80V10.69M0.75 11.80V10.52M1.25 11.80V10.51M1.75 11.80V11.47M2.25 11.80V11.12M2.75 11.80V11.21M3.25 11.80V10.95M3.75 11.80V10.59M4.25 11.80V11.44M4.75 11.80V11.33M5.25 11.80V11.21M5.75 11.80V11.08M6.25 11.80V10.57M6.75 11.80V11.42M7.25 11.80V10.76M7.75 11.80V11.03M8.25 11.80V11.06M8.75 11.80V11.04M9.25 11.80V11.29M9.75 11.80V10.67M10.25 11.80V10.83M10.75 11.80V10.75M11.25 11.80V11.47M11.75 11.80V11.12M12.25 11.80V10.66M12.75 11.80V11.30M13.25 11.80V9.80M13.75 11.80V11.33M14.25 11.80V11.10M14.75 11.80V10.07M15.25 11.80V10.89M15.75 11.80V10.90M16.25 11.80V11.48M16.75 11.80V10.53M17.25 11.80V11.09M17.75 11.80V11.45M18.25 11.80V10.88M18.75 11.80V11.29M19.25 11.80V10.85M19.75 11.80V10.79M20.25 11.80V10.97M20.75 11.80V11.43M21.25 11.80V10.73M21.75 11.80V11.20M22.25 11.80V10.90M22.75 11.80V10.85M23.25 11.80V11.39M23.75 11.80V10.59M24.25 11.80V10.52M24.75 11.80V11.12M25.25 11.80V10.34M25.75 11.80V10.18M26.25 11.80V10.73M26.75 11.80V11.42M27.25 11.80V10.96M27.75 11.80V10.56M28.25 11.80V10.66M28.75 11.80V11.18M29.25 11.80V11.13M29.75 11.80V10.68M30.25 11.80V10.71M30.75 11.80V10.51M31.25 11.80V11.48M31.75 11.80V10.36M32.25 11.80V10.90M32.75 11.80V11.29M33.25 11.80V11.20M33.75 11.80V11.42M34.25 11.80V11.44M34.75 11.80V11.13M35.25 11.80V10.92M35.75 11.80V11.25M36.25 11.80V11.21M36.75 11.80V11.24M37.25 11.80V11.05M37.75 11.80V11.31M38.25 11.80V11.04M38.75 11.80V10.06M39.25 11.80V10.79M39.75 11.80V10.72M40.25 11.80V11.10M40.75 11.80V10.96M41.25 11.80V10.78M41.75 11.80V11.22M42.25 11.80V10.23M42.75 11.80V10.95M43.25 11.80V10.59M43.75 11.80V10.92M44.25 11.80V10.65M44.75 11.80V11.06M45.25 11.80V11.45M45.75 11.80V10.64M46.25 11.80V10.93M46.75 11.80V11.29M47.25 11.80V10.80M47.75 11.80V11.32M48.25 11.80V11.42M48.75 11.80V11.06M49.25 11.80V11.37M49.75 11.80V11.00M50.25 11.80V10.61M50.75 11.80V10.91M51.25 11.80V10.99M51.75 11.80V10.87M52.25 11.80V10.50M52.75 11.80V10.65M53.25 11.80V11.26M53.75 11.80V10.34M54.25 11.80V10.74M54.75 11.80V10.72M55.25 11.80V11.39M55.75 11.80V10.73M56.25 11.80V10.60M56.75 11.80V11.08M57.25 11.80V11.13M57.75 11.80V10.61M58.25 11.80V10.69M58.75 11.80V11.14M59.25 11.80V10.91M59.75 11.80V10.95M60.25 11.80V10.05M60.75 11.80V11.46M61.25 11.80V11.28M61.75 11.80V11.25M62.25 11.80V11.09M62.75 11.80V11.13M63.25 11.80V10.21M63.75 11.80V11.35M64.25 11.80V10.64M64.75 11.80V10.65M65.25 11.80V11.23M65.75 11.80V11.03M66.25 11.80V10.82M66.75 11.80V11.03M67.25 11.80V10.47M67.75 11.80V11.15M68.25 11.80V11.12M68.75 11.80V10.94M69.25 11.80V10.90M69.75 11.80V10.70M70.25 11.80V10.83M70.75 11.80V11.44M71.25 11.80V11.18M71.75 11.80V11.15M72.25 11.80V10.54M72.75 11.80V10.85M73.25 11.80V10.91M73.75 11.80V11.36M74.25 11.80V10.54M74.75 11.80V11.00M75.25 11.80V11.09M75.75 11.80V11.13M76.25 11.80V10.81M76.75 11.80V11.09M77.25 11.80V11.38M77.75 11.80V10.76M78.25 11.80V11.44M78.75 11.80V11.25M79.25 11.80V10.81M79.75 11.80V11.23M80.25 11.80V9.86M80.75 11.80V11.46M81.25 11.80V10.92M81.75 11.80V11.46M82.25 11.80V11.36M82.75 11.80V10.51M83.25 11.80V11.17M83.75 11.80V11.10M84.25 11.80V11.31M84.75 11.80V9.73M85.25 11.80V10.67M85.75 11.80V10.42M86.25 11.80V10.51M86.75 11.80V11.10M87.25 11.80V10.30M87.75 11.80V10.80M88.25 11.80V11.16M88.75 11.80V10.93M89.25 11.80V11.37M89.75 11.80V10.49M90.25 11.80V11.42M90.75 11.80V10.55M91.25 11.80V11.17M91.75 11.80V10.75M92.25 11.80V11.14M92.75 11.80V11.03M93.25 11.80V11.47M93.75 11.80V10.62M94.25 11.80V11.20M94.75 11.80V11.06M95.25 11.80V9.80M95.75 11.80V11.15M96.25 11.80V11.14M96.75 11.80V10.78M97.25 11.80V10.49M97.75 11.80V10.74M98.25 11.80V10.56M98.75 11.80V10.62M99.25 11.80V10.79M99.75 11.80V11.29M100.25 11.80V11.32M100.75 11.80V10.05M101.25 11.80V10.94M101.75 11.80V10.04M102.25 11.80V11.47M102.75 11.80V11.31M103.25 11.80V10.71M103.75 11.80V10.79M104.25 11.80V10.76M104.75 11.80V11.33M105.25 11.80V11.40M105.75 11.80V11.32M106.25 11.80V11.46M106.75 11.80V11.36M107.25 11.80V11.41M107.75 11.80V11.42M108.25 11.80V11.07M108.75 11.80V11.02M109.25 11.80V10.90M109.75 11.80V10.58M110.25 11.80V10.89M110.75 11.80V11.22M111.25 11.80V10.64M111.75 11.80V10.11M112.25 11.80V11.17M112.75 11.80V10.52M113.25 11.80V10.94M113.75 11.80V11.12M114.25 11.80V11.42M114.75 11.80V10.64M115.25 11.80V11.25M115.75 11.80V10.11M116.25 11.80V9.78M116.75 11.80V10.79M117.25 11.80V10.57M117.75 11.80V11.31M118.25 11.80V11.49M118.75 11.80V10.67M119.25 11.80V9.89M119.75 11.80V10.88M120.25 11.80V11.44M120.75 11.80V10.62M121.25 11.80V10.84M121.75 11.80V10.02M122.25 11.80V11.07M122.75 11.80V11.04M123.25 11.80V10.77M123.75 11.80V10.88M124.25 11.80V9.94M124.75 11.80V10.98M125.25 11.80V11.23M125.75 11.80V10.94M126.25 11.80V10.57M126.75 11.80V10.57M127.25 11.80V11.32M127.75 11.80V11.50M128.25 11.80V10.93M128.75 11.80V10.56M129.25 11.80V10.71M129.75 11.80V11.27M130.25 11.80V10.90M130.75 11.80V10.23M131.25 11.80V10.59M131.75 11.80V10.13M132.25 11.80V10.75M132.75 11.80V10.33M133.25 11.80V9.99M133.75 11.80V10.86M134.25 11.80V10.69M134.75 11.80V10.67M135.25 11.80V10.76M135.75 11.80V9.93M136.25 11.80V11.27M136.75 11.80V11.24M137.25 11.80V10.74M137.75 11.80V10.64M138.25 11.80V11.45M138.75 11.80V11.22M139.25 11.80V10.67M139.75 11.80V10.58M140.25 11.80V10.57M140.75 11.80V11.38M141.25 11.80V11.01M141.75 11.80V10.93M142.25 11.80V11.38M142.75 11.80V10.55M143.25 11.80V10.61M143.75 11.80V11.14M144.25 11.80V10.83M144.75 11.80V10.79M145.25 11.80V10.70M145.75 11.80V11.07M146.25 11.80V10.75M146.75 11.80V10.63M147.25 11.80V10.71M147.75 11.80V10.91M148.25 11.80V11.06M148.75 11.80V11.13M149.25 11.80V10.97M149.75 11.80V11.44M150.25 11.80V10.90M150.75 11.80V10.82M151.25 11.80V10.55M151.75 11.80V10.55M152.25 11.80V11.01M152.75 11.80V11.50M153.25 11.80V10.67M153.75 11.80V10.65M154.25 11.80V10.81M154.75 11.80V10.58M155.25 11.80V11.23M155.75 11.80V10.85M156.25 11.80V10.92M156.75 11.80V11.14M157.25 11.80V10.97M157.75 11.80V11.02M158.25 11.80V9.95M158.75 11.80V11.42M159.25 11.80V11.04M159.75 11.80V11.06M160.25 11.80V10.93M160.75 11.80V11.50M161.25 11.80V10.73M161.75 11.80V11.07M162.25 11.80V11.24M162.75 11.80V10.74M163.25 11.80V11.49M163.75 11.80V10.60M164.25 11.80V11.07M164.75 11.80V10.55M165.25 11.80V11.00M165.75 11.80V10.88M166.25 11.80V10.93M166.75 11.80V11.04M167.25 11.80V11.38M167.75 11.80V10.72M168.25 11.80V11.48M168.75 11.80V10.78M169.25 11.80V10.48M169.75 11.80V11.04M170.25 11.80V10.72M170.75 11.80V11.26M171.25 11.80V11.00M171.75 11.80V11.14M172.25 11.80V10.99M172.75 11.80V11.15M173.25 11.80V10.10M173.75 11.80V11.29M174.25 11.80V10.65M174.75 11.80V11.28M175.25 11.80V11.37M175.75 11.80V10.37M176.25 11.80V10.94M176.75 11.80V10.68M177.25 11.80V11.15M177.75 11.80V11.25M178.25 11.80V10.59M178.75 11.80V11.41M179.25 11.80V11.13M179.75 11.80V10.55M180.25 11.80V11.06M180.75 11.80V10.18M181.25 11.80V10.66M181.75 11.80V10.99M182.25 11.80V11.11M182.75 11.80V11.01M183.25 11.80V10.67M183.75 11.80V10.48M184.25 11.80V10.63M184.75 11.80V10.56M185.25 11.80V10.88M185.75 11.80V10.28M186.25 11.80V10.96M186.75 11.80V11.36M187.25 11.80V11.07M187.75 11.80V11.34M188.25 11.80V10.71M188.75 11.80V11.23M189.25 11.80V11.22M189.75 11.80V10.85M190.25 11.80V11.26M190.75 11.80V11.46M191.25 11.80V11.05M191.75 11.80V11.40M192.25 11.80V10.89M192.75 11.80V10.58M193.25 11.80V11.21M193.75 11.80V10.99M194.25 11.80V10.50M194.75 11.80V10.95M195.25 11.80V10.72M195.75 11.80V10.70M196.25 11.80V10.54M196.75 11.80V10.79M197.25 11.80V10.90M197.75 11.80V11.37M198.25 11.80V11.31M198.75 11.80V11.11M199.25 11.80V11.48M199.75 11.80V10.74M200.25 11.80V10.92M200.75 11.80V11.43M201.25 11.80V10.79M201.75 11.80V10.92M202.25 11.80V10.89M202.75 11.80V11.46M203.25 11.80V10.91M203.75 11.80V10.31M204.25 11.80V10.57M204.75 11.80V10.77M205.25 11.80V11.30M205.75 11.80V10.93M206.25 11.80V10.63M206.75 11.80V11.20M207.25 11.80V11.11M207.75 11.80V10.65M208.25 11.80V10.86M208.75 11.80V11.44M209.25 11.80V11.34M209.75 11.80V10.07M210.25 11.80V10.61M210.75 11.80V11.28M211.25 11.80V10.51M211.75 11.80V10.73M212.25 11.80V10.76M212.75 11.80V11.37M213.25 11.80V10.96M213.75 11.80V11.45M214.25 11.80V11.49M214.75 11.80V11.23M215.25 11.80V11.38M215.75 11.80V11.27M216.25 11.80V10.69M216.75 11.80V11.49M217.25 11.80V10.98M217.75 11.80V10.89M218.25 11.80V11.06M218.75 11.80V10.64M219.25 11.80V10.52M219.75 11.80V10.80M220.25 11.80V10.86M220.75 11.80V10.62M221.25 11.80V10.65M221.75 11.80V11.31M222.25 11.80V10.54M222.75 11.80V10.72M223.25 11.80V10.52M223.75 11.80V11.40M224.25 11.80V9.79M224.75 11.80V10.79M225.25 11.80V10.66M225.75 11.80V9.83M226.25 11.80V11.50M226.75 11.80V10.21M227.25 11.80V10.57M227.75 11.80V11.04M228.25 11.80V11.16M228.75 11.80V10.67M229.25 11.80V10.99M229.75 11.80V11.14M230.25 11.80V10.81M230.75 11.80V10.51M231.25 11.80V10.70M231.75 11.80V10.64M232.25 11.80V11.32M232.75 11.80V10.62M233.25 11.80V11.29M233.75 11.80V11.36M234.25 11.80V10.08M234.75 11.80V11.01M235.25 11.80V11.03M235.75 11.80V10.96M236.25 11.80V11.02M236.75 11.80V11.45M237.25 11.80V10.53M237.75 11.80V10.18M238.25 11.80V9.87M238.75 11.80V10.40M239.25 11.80V11.13M239.75 11.80V10.62M240.25 11.80V11.24M240.75 11.80V10.80M241.25 11.80V10.58M241.75 11.80V10.89M242.25 11.80V10.63M242.75 11.80V11.45M243.25 11.80V10.90M243.75 11.80V9.91M244.25 11.80V11.05M244.75 11.80V10.76M245.25 11.80V11.08M245.75 11.80V10.64M246.25 11.80V10.96M246.75 11.80V10.72M247.25 11.80V10.85M247.75 11.80V11.34M248.25 11.80V11.04M248.75 11.80V11.34M249.25 11.80V11.22M249.75 11.80V11.40M250.25 11.80V10.79M250.75 11.80V11.19M251.25 11.80V11.33M251.75 11.80V11.13M252.25 11.80V10.71M252.75 11.80V10.66M253.25 11.80V10.74M253.75 11.80V10.88M254.25 11.80V11.16M254.75 11.80V10.96M255.25 11.80V11.05M255.75 11.80V10.63M256.25 11.80V10.77M256.75 11.80V10.86M257.25 11.80V10.63M257.75 11.80V10.99M258.25 11.80V11.15M258.75 11.80V11.43M259.25 11.80V11.16M259.75 11.80V10.51M260.25 11.80V11.25M260.75 11.80V10.89M261.25 11.80V10.79M261.75 11.80V10.64M262.25 11.80V11.01M262.75 11.80V10.98M263.25 11.80V10.99M263.75 11.80V11.22M264.25 11.80V11.36M264.75 11.80V10.56M265.25 11.80V10.56M265.75 11.80V10.85M266.25 11.80V10.98M266.75 11.80V10.85M267.25 11.80V11.29M267.75 11.80V11.24M268.25 11.80V10.86M268.75 11.80V10.84M269.25 11.80V10.94M269.75 11.80V11.46M270.25 11.80V10.00M270.75 11.80V11.06M271.25 11.80V11.29M271.75 11.80V11.15M272.25 11.80V11.35M272.75 11.80V11.44M273.25 11.80V10.58M273.75 11.80V10.62M274.25 11.80V11.13M274.75 11.80V10.20M275.25 11.80V11.15M275.75 11.80V10.86M276.25 11.80V11.49M276.75 11.80V10.61M277.25 11.80V10.53M277.75 11.80V11.50M278.25 11.80V11.42M278.75 11.80V11.02M279.25 11.80V10.80M279.75 11.80V10.76M280.25 11.80V10.95M280.75 11.80V11.10M281.25 11.80V10.90M281.75 11.80V10.97M282.25 11.80V10.54M282.75 11.80V11.16M283.25 11.80V10.57M283.75 11.80V10.80M284.25 11.80V10.83M284.75 11.80V11.11M285.25 11.80V10.53M285.75 11.80V11.04M286.25 11.80V11.14M286.75 11.80V10.86M287.25 11.80V11.16M287.75 11.80V11.42M288.25 11.80V10.84M288.75 11.80V11.39M289.25 11.80V10.96M289.75 11.80V10.97M290.25 11.80V11.09M290.75 11.80V11.06M291.25 11.80V10.59M291.75 11.80V11.00M292.25 11.80V11.04M292.75 11.80V10.86M293.25 11.80V11.42M293.75 11.80V11.04M294.25 11.80V10.46M294.75 11.80V11.20M295.25 11.80V10.95M295.75 11.80V10.84M296.25 11.80V11.32M296.75 11.80V11.08M297.25 11.80V10.84M297.75 11.80V10.64M298.25 11.80V10.76M298.75 11.80V11.48M299.25 11.80V10.60M299.75 11.80V11.09M300.25 11.80V10.52M300.75 11.80V10.87M301.25 11.80V10.64M301.75 11.80V11.02M302.25 11.80V11.16M302.75 11.80V11.32M303.25 11.80V11.07M303.75 11.80V11.28M304.25 11.80V10.92M304.75 11.80V9.90M305.25 11.80V10.64M305.75 11.80V10.55M306.25 11.80V10.27M306.75 11.80V11.18M307.25 11.80V10.89M307.75 11.80V10.56M308.25 11.80V10.63M308.75 11.80V10.94M309.25 11.80V10.63M309.75 11.80V11.45M310.25 11.80V11.41M310.75 11.80V11.32M311.25 11.80V11.30M311.75 11.80V10.82M312.25 11.80V10.68M312.75 11.80V11.26M313.25 11.80V10.76M313.75 11.80V10.82M314.25 11.80V10.92M314.75 11.80V10.74M315.25 11.80V10.88M315.75 11.80V11.19M316.25 11.80V10.50M316.75 11.80V10.51M317.25 11.80V10.87M317.75 11.80V10.60M318.25 11.80V10.59M318.75 11.80V10.86M319.25 11.80V10.62M319.75 11.80V10.29M320.25 11.80V10.71M320.75 11.80V11.18M321.25 11.80V11.19M321.75 11.80V10.71M322.25 11.80V11.26M322.75 11.80V11.39M323.25 11.80V11.36M323.75 11.80V11.28M324.25 11.80V11.34M324.75 11.80V11.27M325.25 11.80V11.25M325.75 11.80V11.50M326.25 11.80V11.27M326.75 11.80V11.19M327.25 11.80V10.80M327.75 11.80V10.92M328.25 11.80V10.68M328.75 11.80V10.37M329.25 11.80V10.97M329.75 11.80V10.60M330.25 11.80V11.05M330.75 11.80V9.90M331.25 11.80V11.35M331.75 11.80V11.04M332.25 11.80V10.63M332.75 11.80V10.91M333.25 11.80V11.26M333.75 11.80V11.25M334.25 11.80V11.43M334.75 11.80V10.54M335.25 11.80V11.00M335.75 11.80V11.23M336.25 11.80V10.76M336.75 11.80V11.19M337.25 11.80V11.23M337.75 11.80V11.11M338.25 11.80V11.49M338.75 11.80V10.76M339.25 11.80V11.00M339.75 11.80V10.61M340.25 11.80V11.16M340.75 11.80V11.19M341.25 11.80V10.58M341.75 11.80V11.35M342.25 11.80V10.13M342.75 11.80V11.15M343.25 11.80V10.89M343.75 11.80V10.63M344.25 11.80V11.15M344.75 11.80V10.44M345.25 11.80V10.98M345.75 11.80V10.93M346.25 11.80V9.78M346.75 11.80V11.33M347.25 11.80V11.20M347.75 11.80V10.79M348.25 11.80V11.46M348.75 11.80V9.71M349.25 11.80V10.66M349.75 11.80V10.81M350.25 11.80V11.17M350.75 11.80V11.49M351.25 11.80V11.00M351.75 11.80V10.57M352.25 11.80V11.41M352.75 11.80V10.66M353.25 11.80V11.28M353.75 11.80V11.19M354.25 11.80V10.52M354.75 11.80V10.46M355.25 11.80V11.05M355.75 11.80V11.12M356.25 11.80V11.03M356.75 11.80V11.24M357.25 11.80V11.17M357.75 11.80V11.37M358.25 11.80V11.11M358.75 11.80V10.79M359.25 11.80V11.26M359.75 11.80V10.61M360.25 11.80V11.37M360.75 11.80V11.22M361.25 11.80V10.93M361.75 11.80V10.88M362.25 11.80V10.60M362.75 11.80V11.41M363.25 11.80V11.05M363.75 11.80V11.08M364.25 11.80V10.53M364.75 11.80V10.58M365.25 11.80V10.95M365.75 11.80V10.68M366.25 11.80V11.18M366.75 11.80V11.36M367.25 11.80V10.87M367.75 11.80V10.95M368.25 11.80V11.30M368.75 11.80V9.74M369.25 11.80V10.70M369.75 11.80V11.33M370.25 11.80V11.45M370.75 11.80V11.31M371.25 11.80V11.02M371.75 11.80V10.93M372.25 11.80V10.59M372.75 11.80V11.16M373.25 11.80V10.23M373.75 11.80V11.40M374.25 11.80V11.15M374.75 11.80V10.89M375.25 11.80V10.93M375.75 11.80V11.08M376.25 11.80V11.42M376.75 11.80V11.39M377.25 11.80V10.65M377.75 11.80V11.05M378.25 11.80V10.72M378.75 11.80V11.24M379.25 11.80V11.38M379.75 11.80V10.60M380.25 11.80V11.12M380.75 11.80V11.36M381.25 11.80V11.30M381.75 11.80V10.92M382.25 11.80V10.97M382.75 11.80V11.36M383.25 11.80V10.61M383.75 11.80V11.06M384.25 11.80V10.51M384.75 11.80V11.25M385.25 11.80V11.30M385.75 11.80V10.68M386.25 11.80V10.66M386.75 11.80V11.28M387.25 11.80V10.97M387.75 11.80V10.50M388.25 11.80V10.25M388.75 11.80V11.49M389.25 11.80V11.30M389.75 11.80V11.29M390.25 11.80V11.32M390.75 11.80V11.05M391.25 11.80V11.46M391.75 11.80V10.91M392.25 11.80V11.09M392.75 11.80V10.76M393.25 11.80V10.90M393.75 11.80V11.26M394.25 11.80V10.95M394.75 11.80V11.21M395.25 11.80V10.28M395.75 11.80V10.60M396.25 11.80V11.14M396.75 11.80V11.13M397.25 11.80V10.57M397.75 11.80V11.44M398.25 11.80V11.26M398.75 11.80V10.19M399.25 11.80V11.26M399.75 11.80V11.01M400.25 11.80V11.22M400.75 11.80V9.78M401.25 11.80V11.18M401.75 11.80V11.29M402.25 11.80V10.52M402.75 11.80V11.29M403.25 11.80V10.50M403.75 11.80V10.70M404.25 11.80V11.10M404.75 11.80V10.94M405.25 11.80V10.54M405.75 11.80V11.48M406.25 11.80V10.85M406.75 11.80V11.01M407.25 11.80V10.88M407.75 11.80V11.49M408.25 11.80V11.48M408.75 11.80V10.54M409.25 11.80V9.79M409.75 11.80V11.48M410.25 11.80V11.38M410.75 11.80V10.64M411.25 11.80V11.24M411.75 11.80V10.63M412.25 11.80V10.43M412.75 11.80V10.90M413.25 11.80V10.99M413.75 11.80V10.56M414.25 11.80V10.74M414.75 11.80V10.72M415.25 11.80V10.90M415.75 11.80V10.56M416.25 11.80V10.42M416.75 11.80V11.45M417.25 11.80V11.06M417.75 11.80V11.45M418.25 11.80V10.61M418.75 11.80V10.78M419.25 11.80V11.26M419.75 11.80V10.58M420.25 11.80V11.39M420.75 11.80V11.44M421.25 11.80V11.21M421.75 11.80V11.04M422.25 11.80V10.89M422.75 11.80V11.15M423.25 11.80V10.76M423.75 11.80V11.31M424.25 11.80V10.66M424.75 11.80V10.70M425.25 11.80V10.79M425.75 11.80V10.67M426.25 11.80V11.20M426.75 11.80V10.68M427.25 11.80V11.39M427.75 11.80V10.58M428.25 11.80V11.17M428.75 11.80V11.46M429.25 11.80V10.39M429.75 11.80V11.03M430.25 11.80V10.84M430.75 11.80V10.74M431.25 11.80V11.05M431.75 11.80V10.76M432.25 11.80V10.34M432.75 11.80V11.24M433.25 11.80V10.99M433.75 11.80V11.09M434.25 11.80V10.53M434.75 11.80V11.44M435.25 11.80V11.34M435.75 11.80V10.85M436.25 11.80V11.43M436.75 11.80V10.07M437.25 11.80V10.68M437.75 11.80V11.47M438.25 11.80V10.86M438.75 11.80V10.24M439.25 11.80V10.64M439.75 11.80V11.25M440.25 11.80V11.20M440.75 11.80V11.11M441.25 11.80V10.78M441.75 11.80V11.22M442.25 11.80V11.36M442.75 11.80V11.49M443.25 11.80V11.05M443.75 11.80V11.23M444.25 11.80V11.17M444.75 11.80V10.59M445.25 11.80V11.00M445.75 11.80V11.27M446.25 11.80V11.30M446.75 11.80V11.32M447.25 11.80V11.23M447.75 11.80V11.23M448.25 11.80V10.97M448.75 11.80V11.31M449.25 11.80V11.19M449.75 11.80V11.39M450.25 11.80V10.81M450.75 11.80V10.59M451.25 11.80V11.09M451.75 11.80V10.78M452.25 11.80V10.67M452.75 11.80V10.75M453.25 11.80V11.02M453.75 11.80V11.33M454.25 11.80V11.21M454.75 11.80V10.74M455.25 11.80V11.22M455.75 11.80V10.77M456.25 11.80V11.27M456.75 11.80V10.59M457.25 11.80V11.23M457.75 11.80V11.16M458.25 11.80V11.46M458.75 11.80V11.39M459.25 11.80V11.44M459.75 11.80V11.11M460.25 11.80V11.07M460.75 11.80V10.64M461.25 11.80V10.63M461.75 11.80V11.42M462.25 11.80V10.24M462.75 11.80V10.70M463.25 11.80V10.63M463.75 11.80V11.05M464.25 11.80V10.56M464.75 11.80V10.38M465.25 11.80V10.87M465.75 11.80V11.48M466.25 11.80V11.38M466.75 11.80V9.84M467.25 11.80V9.82M467.75 11.80V11.50M468.25 11.80V11.10M468.75 11.80V10.90M469.25 11.80V11.33M469.75 11.80V11.22M470.25 11.80V10.75M470.75 11.80V11.01M471.25 11.80V10.96M471.75 11.80V11.09M472.25 11.80V11.29M472.75 11.80V11.47M473.25 11.80V11.29M473.75 11.80V10.50M474.25 11.80V11.11M474.75 11.80V10.88M475.25 11.80V11.34M475.75 11.80V11.08M476.25 11.80V10.27M476.75 11.80V11.08M477.25 11.80V11.14M477.75 11.80V11.33M478.25 11.80V11.09M478.75 11.80V10.94M479.25 11.80V11.26M479.75 11.80V11.23M480.25 11.80V10.01M480.75 11.80V11.49M481.25 11.80V10.84M481.75 11.80V10.74M482.25 11.80V10.03M482.75 11.80V11.47M483.25 11.80V11.31M483.75 11.80V10.99M484.25 11.80V10.54M484.75 11.80V11.07M485.25 11.80V10.13M485.75 11.80V11.00M486.25 11.80V10.91M486.75 11.80V11.43M487.25 11.80V10.86M487.75 11.80V10.34M488.25 11.80V11.36M488.75 11.80V10.84M489.25 11.80V10.86M489.75 11.80V11.17M490.25 11.80V9.90M490.75 11.80V11.23M491.25 11.80V10.84M491.75 11.80V10.88M492.25 11.80V11.09M492.75 11.80V10.95M493.25 11.80V10.63M493.75 11.80V10.98M494.25 11.80V11.15M494.75 11.80V10.75M495.25 11.80V11.36M495.75 11.80V10.95M496.25 11.80V11.26M496.75 11.80V10.87M497.25 11.80V10.09M497.75 11.80V11.36M498.25 11.80V11.05M498.75 11.80V10.56M499.25 11.80V10.98M499.75 11.80V10.72M500.25 11.80V10.73M500.75 11.80V10.50M501.25 11.80V11.08M501.75 11.80V10.74M502.25 11.80V11.22M502.75 11.80V10.64M503.25 11.80V11.20M503.75 11.80V10.80M504.25 11.80V11.39M504.75 11.80V11.27M505.25 11.80V10.62M505.75 11.80V10.68M506.25 11.80V10.61M506.75 11.80V10.73M507.25 11.80V10.99M507.75 11.80V10.58M508.25 11.80V10.70M508.75 11.80V10.63M509.25 11.80V11.09M509.75 11.80V10.75M510.25 11.80V10.93M510.75 11.80V10.84M511.25 11.80V10.57M511.75 11.80V10.62M512.25 11.80V10.91M512.75 11.80V10.63M513.25 11.80V10.72M513.75 11.80V10.67M514.25 11.80V11.10M514.75 11.80V11.10M515.25 11.80V10.88M515.75 11.80V10.97M516.25 11.80V10.98M516.75 11.80V10.66M517.25 11.80V10.75M517.75 11.80V10.82M518.25 11.80V11.24M518.75 11.80V10.38M519.25 11.80V10.85M519.75 11.80V10.75M520.25 11.80V10.97M520.75 11.80V11.07M521.25 11.80V11.12M521.75 11.80V11.32M522.25 11.80V10.39M522.75 11.80V10.30M523.25 11.80V10.02M523.75 11.80V10.66M524.25 11.80V10.71M524.75 11.80V10.97M525.25 11.80V11.04M525.75 11.80V10.05M526.25 11.80V10.75M526.75 11.80V10.97M527.25 11.80V11.24M527.75 11.80V11.08M528.25 11.80V11.22M528.75 11.80V11.07M529.25 11.80V10.89M529.75 11.80V11.03M530.25 11.80V10.73M530.75 11.80V11.05M531.25 11.80V11.41M531.75 11.80V11.05M532.25 11.80V10.50M532.75 11.80V11.27M533.25 11.80V11.28M533.75 11.80V11.04M534.25 11.80V10.54M534.75 11.80V10.81M535.25 11.80V10.65M535.75 11.80V11.31M536.25 11.80V11.25M536.75 11.80V10.71M537.25 11.80V10.87M537.75 11.80V11.39M538.25 11.80V11.20M538.75 11.80V10.01M539.25 11.80V10.94M539.75 11.80V10.45M540.25 11.80V11.08M540.75 11.80V10.89M541.25 11.80V10.55M541.75 11.80V10.62M542.25 11.80V10.81M542.75 11.80V10.57M543.25 11.80V11.16M543.75 11.80V11.32M544.25 11.80V10.96M544.75 11.80V9.72M545.25 11.80V11.46M545.75 11.80V11.27M546.25 11.80V11.06M546.75 11.80V10.62M547.25 11.80V11.41M547.75 11.80V11.31M548.25 11.80V11.35M548.75 11.80V11.18M549.25 11.80V11.27M549.75 11.80V10.60M550.25 11.80V11.47M550.75 11.80V10.40M551.25 11.80V10.74M551.75 11.80V10.85M552.25 11.80V11.17M552.75 11.80V11.27M553.25 11.80V11.02M553.75 11.80V11.30M554.25 11.80V10.53M554.75 11.80V10.93M555.25 11.80V10.63M555.75 11.80V10.82M556.25 11.80V9.76" stroke="#00a9ce" stroke-width="0.5" fill="none" opacity="0.9"/><path d="M0.25 18.00V20.19M0.75 18.00V18.87M1.25 18.00V18.55M1.75 18.00V18.99M2.25 18.00V19.17M2.75 18.00V19.20M3.25 18.00V19.04M3.75 18.00V18.69M4.25 18.00V18.93M4.75 18.00V18.34M5.25 18.00V18.64M5.75 18.00V19.07M6.25 18.00V19.20M6.75 18.00V20.13M7.25 18.00V19.53M7.75 18.00V20.61M8.25 18.00V19.26M8.75 18.00V19.03M9.25 18.00V18.63M9.75 18.00V18.56M10.25 18.00V18.44M10.75 18.00V19.23M11.25 18.00V19.43M11.75 18.00V22.46M12.25 18.00V19.44M12.75 18.00V20.48M13.25 18.00V18.52M13.75 18.00V19.33M14.25 18.00V19.20M14.75 18.00V18.61M15.25 18.00V18.59M15.75 18.00V18.98M16.25 18.00V19.16M16.75 18.00V18.51M17.25 18.00V20.63M17.75 18.00V19.18M18.25 18.00V19.07M18.75 18.00V18.60M19.25 18.00V22.38M19.75 18.00V18.50M20.25 18.00V19.54M20.75 18.00V18.42M21.25 18.00V22.13M21.75 18.00V19.00M22.25 18.00V18.79M22.75 18.00V22.37M23.25 18.00V18.95M23.75 18.00V18.31M24.25 18.00V19.08M24.75 18.00V19.20M25.25 18.00V18.89M25.75 18.00V20.66M26.25 18.00V18.95M26.75 18.00V19.20M27.25 18.00V18.50M27.75 18.00V19.00M28.25 18.00V18.82M28.75 18.00V19.50M29.25 18.00V19.87M29.75 18.00V18.88M30.25 18.00V20.48M30.75 18.00V18.91M31.25 18.00V19.59M31.75 18.00V22.03M32.25 18.00V18.66M32.75 18.00V18.31M33.25 18.00V18.43M33.75 18.00V19.81M34.25 18.00V19.73M34.75 18.00V20.60M35.25 18.00V19.47M35.75 18.00V19.69M36.25 18.00V18.63M36.75 18.00V18.45M37.25 18.00V19.16M37.75 18.00V19.28M38.25 18.00V18.63M38.75 18.00V19.94M39.25 18.00V19.29M39.75 18.00V18.97M40.25 18.00V19.54M40.75 18.00V19.19M41.25 18.00V18.50M41.75 18.00V18.96M42.25 18.00V19.11M42.75 18.00V21.88M43.25 18.00V19.51M43.75 18.00V18.99M44.25 18.00V19.59M44.75 18.00V18.70M45.25 18.00V19.63M45.75 18.00V19.28M46.25 18.00V19.27M46.75 18.00V18.42M47.25 18.00V19.10M47.75 18.00V19.83M48.25 18.00V18.55M48.75 18.00V19.36M49.25 18.00V18.69M49.75 18.00V18.41M50.25 18.00V19.24M50.75 18.00V18.59M51.25 18.00V22.45M51.75 18.00V18.77M52.25 18.00V18.90M52.75 18.00V19.38M53.25 18.00V18.76M53.75 18.00V19.27M54.25 18.00V20.53M54.75 18.00V19.33M55.25 18.00V19.05M55.75 18.00V18.79M56.25 18.00V22.30M56.75 18.00V18.90M57.25 18.00V19.95M57.75 18.00V19.49M58.25 18.00V19.54M58.75 18.00V19.45M59.25 18.00V19.47M59.75 18.00V18.74M60.25 18.00V18.42M60.75 18.00V18.57M61.25 18.00V18.87M61.75 18.00V18.43M62.25 18.00V19.30M62.75 18.00V18.53M63.25 18.00V19.07M63.75 18.00V20.26M64.25 18.00V18.88M64.75 18.00V19.58M65.25 18.00V19.03M65.75 18.00V18.63M66.25 18.00V19.81M66.75 18.00V18.97M67.25 18.00V20.57M67.75 18.00V19.01M68.25 18.00V19.38M68.75 18.00V18.96M69.25 18.00V19.17M69.75 18.00V18.46M70.25 18.00V19.46M70.75 18.00V18.36M71.25 18.00V19.48M71.75 18.00V19.19M72.25 18.00V19.37M72.75 18.00V19.57M73.25 18.00V20.22M73.75 18.00V18.51M74.25 18.00V18.57M74.75 18.00V19.89M75.25 18.00V22.35M75.75 18.00V18.91M76.25 18.00V19.14M76.75 18.00V18.63M77.25 18.00V18.69M77.75 18.00V18.49M78.25 18.00V21.53M78.75 18.00V18.49M79.25 18.00V18.72M79.75 18.00V18.53M80.25 18.00V18.30M80.75 18.00V18.95M81.25 18.00V19.28M81.75 18.00V19.39M82.25 18.00V20.69M82.75 18.00V18.31M83.25 18.00V20.41M83.75 18.00V18.51M84.25 18.00V18.35M84.75 18.00V18.86M85.25 18.00V19.50M85.75 18.00V19.54M86.25 18.00V19.17M86.75 18.00V18.57M87.25 18.00V19.31M87.75 18.00V19.31M88.25 18.00V18.88M88.75 18.00V18.49M89.25 18.00V18.57M89.75 18.00V19.30M90.25 18.00V19.22M90.75 18.00V18.69M91.25 18.00V18.43M91.75 18.00V19.58M92.25 18.00V18.66M92.75 18.00V19.33M93.25 18.00V19.93M93.75 18.00V18.53M94.25 18.00V18.30M94.75 18.00V18.55M95.25 18.00V18.71M95.75 18.00V19.55M96.25 18.00V19.09M96.75 18.00V18.50M97.25 18.00V19.51M97.75 18.00V18.75M98.25 18.00V19.57M98.75 18.00V19.14M99.25 18.00V19.23M99.75 18.00V19.33M100.25 18.00V18.32M100.75 18.00V19.08M101.25 18.00V19.42M101.75 18.00V18.97M102.25 18.00V20.67M102.75 18.00V18.55M103.25 18.00V19.51M103.75 18.00V18.49M104.25 18.00V18.52M104.75 18.00V18.50M105.25 18.00V18.74M105.75 18.00V18.39M106.25 18.00V18.46M106.75 18.00V19.57M107.25 18.00V18.51M107.75 18.00V19.30M108.25 18.00V18.76M108.75 18.00V18.87M109.25 18.00V18.85M109.75 18.00V18.82M110.25 18.00V19.17M110.75 18.00V18.40M111.25 18.00V20.32M111.75 18.00V18.88M112.25 18.00V19.06M112.75 18.00V20.23M113.25 18.00V19.42M113.75 18.00V19.46M114.25 18.00V18.85M114.75 18.00V18.55M115.25 18.00V18.89M115.75 18.00V19.38M116.25 18.00V19.35M116.75 18.00V19.16M117.25 18.00V18.61M117.75 18.00V19.11M118.25 18.00V19.10M118.75 18.00V18.46M119.25 18.00V18.91M119.75 18.00V19.00M120.25 18.00V18.96M120.75 18.00V18.32M121.25 18.00V18.88M121.75 18.00V20.45M122.25 18.00V19.12M122.75 18.00V18.53M123.25 18.00V18.47M123.75 18.00V19.38M124.25 18.00V19.52M124.75 18.00V18.72M125.25 18.00V18.54M125.75 18.00V19.34M126.25 18.00V19.63M126.75 18.00V18.48M127.25 18.00V20.56M127.75 18.00V19.42M128.25 18.00V18.85M128.75 18.00V18.85M129.25 18.00V18.66M129.75 18.00V19.46M130.25 18.00V19.28M130.75 18.00V18.99M131.25 18.00V18.85M131.75 18.00V18.57M132.25 18.00V19.11M132.75 18.00V19.11M133.25 18.00V20.49M133.75 18.00V19.19M134.25 18.00V18.78M134.75 18.00V19.03M135.25 18.00V18.53M135.75 18.00V19.03M136.25 18.00V19.16M136.75 18.00V18.86M137.25 18.00V18.64M137.75 18.00V18.45M138.25 18.00V19.15M138.75 18.00V19.56M139.25 18.00V18.71M139.75 18.00V19.11M140.25 18.00V20.30M140.75 18.00V18.85M141.25 18.00V18.56M141.75 18.00V18.55M142.25 18.00V18.75M142.75 18.00V18.97M143.25 18.00V19.41M143.75 18.00V19.11M144.25 18.00V18.66M144.75 18.00V19.49M145.25 18.00V19.91M145.75 18.00V20.32M146.25 18.00V20.05M146.75 18.00V19.33M147.25 18.00V19.68M147.75 18.00V18.69M148.25 18.00V21.44M148.75 18.00V18.33M149.25 18.00V19.20M149.75 18.00V20.40M150.25 18.00V18.49M150.75 18.00V18.95M151.25 18.00V18.81M151.75 18.00V18.89M152.25 18.00V18.58M152.75 18.00V19.46M153.25 18.00V18.75M153.75 18.00V18.77M154.25 18.00V22.44M154.75 18.00V18.57M155.25 18.00V20.46M155.75 18.00V19.30M156.25 18.00V18.85M156.75 18.00V18.97M157.25 18.00V19.21M157.75 18.00V19.32M158.25 18.00V18.90M158.75 18.00V18.92M159.25 18.00V18.48M159.75 18.00V19.00M160.25 18.00V19.23M160.75 18.00V19.29M161.25 18.00V20.61M161.75 18.00V18.41M162.25 18.00V19.32M162.75 18.00V19.13M163.25 18.00V19.44M163.75 18.00V18.63M164.25 18.00V18.44M164.75 18.00V18.85M165.25 18.00V19.10M165.75 18.00V18.66M166.25 18.00V19.45M166.75 18.00V19.32M167.25 18.00V18.45M167.75 18.00V18.37M168.25 18.00V19.28M168.75 18.00V18.49M169.25 18.00V19.51M169.75 18.00V18.82M170.25 18.00V19.29M170.75 18.00V18.45M171.25 18.00V19.57M171.75 18.00V18.66M172.25 18.00V18.91M172.75 18.00V18.96M173.25 18.00V19.93M173.75 18.00V19.64M174.25 18.00V19.21M174.75 18.00V20.53M175.25 18.00V18.40M175.75 18.00V18.37M176.25 18.00V19.21M176.75 18.00V20.55M177.25 18.00V18.83M177.75 18.00V18.43M178.25 18.00V21.18M178.75 18.00V19.37M179.25 18.00V19.21M179.75 18.00V19.51M180.25 18.00V18.61M180.75 18.00V19.43M181.25 18.00V18.69M181.75 18.00V19.47M182.25 18.00V18.71M182.75 18.00V18.76M183.25 18.00V19.52M183.75 18.00V19.43M184.25 18.00V19.37M184.75 18.00V19.96M185.25 18.00V18.68M185.75 18.00V18.59M186.25 18.00V19.52M186.75 18.00V18.85M187.25 18.00V19.23M187.75 18.00V18.92M188.25 18.00V18.76M188.75 18.00V18.64M189.25 18.00V18.46M189.75 18.00V19.36M190.25 18.00V18.39M190.75 18.00V19.06M191.25 18.00V18.90M191.75 18.00V18.94M192.25 18.00V19.56M192.75 18.00V19.36M193.25 18.00V19.48M193.75 18.00V18.93M194.25 18.00V19.80M194.75 18.00V19.57M195.25 18.00V19.23M195.75 18.00V18.59M196.25 18.00V19.36M196.75 18.00V20.69M197.25 18.00V19.41M197.75 18.00V20.13M198.25 18.00V20.32M198.75 18.00V18.96M199.25 18.00V18.77M199.75 18.00V19.05M200.25 18.00V18.63M200.75 18.00V18.86M201.25 18.00V18.58M201.75 18.00V19.60M202.25 18.00V18.32M202.75 18.00V20.69M203.25 18.00V18.47M203.75 18.00V18.32M204.25 18.00V18.95M204.75 18.00V19.20M205.25 18.00V19.05M205.75 18.00V18.62M206.25 18.00V18.65M206.75 18.00V20.33M207.25 18.00V19.32M207.75 18.00V19.42M208.25 18.00V18.66M208.75 18.00V18.38M209.25 18.00V19.34M209.75 18.00V18.53M210.25 18.00V18.79M210.75 18.00V19.25M211.25 18.00V19.22M211.75 18.00V19.58M212.25 18.00V18.32M212.75 18.00V18.58M213.25 18.00V19.13M213.75 18.00V20.47M214.25 18.00V18.57M214.75 18.00V18.57M215.25 18.00V19.28M215.75 18.00V18.55M216.25 18.00V18.37M216.75 18.00V20.64M217.25 18.00V18.77M217.75 18.00V19.85M218.25 18.00V18.71M218.75 18.00V19.58M219.25 18.00V19.89M219.75 18.00V18.83M220.25 18.00V19.50M220.75 18.00V19.39M221.25 18.00V20.50M221.75 18.00V18.61M222.25 18.00V19.70M222.75 18.00V18.31M223.25 18.00V19.45M223.75 18.00V19.53M224.25 18.00V20.62M224.75 18.00V20.48M225.25 18.00V19.50M225.75 18.00V18.74M226.25 18.00V19.43M226.75 18.00V18.45M227.25 18.00V19.15M227.75 18.00V19.23M228.25 18.00V18.38M228.75 18.00V18.82M229.25 18.00V19.12M229.75 18.00V19.38M230.25 18.00V19.50M230.75 18.00V18.38M231.25 18.00V19.62M231.75 18.00V19.51M232.25 18.00V19.46M232.75 18.00V19.96M233.25 18.00V18.46M233.75 18.00V18.33M234.25 18.00V18.59M234.75 18.00V18.35M235.25 18.00V19.75M235.75 18.00V18.35M236.25 18.00V18.64M236.75 18.00V18.94M237.25 18.00V18.89M237.75 18.00V18.92M238.25 18.00V18.40M238.75 18.00V18.85M239.25 18.00V20.63M239.75 18.00V18.41M240.25 18.00V20.58M240.75 18.00V19.05M241.25 18.00V18.56M241.75 18.00V19.56M242.25 18.00V18.61M242.75 18.00V18.70M243.25 18.00V19.33M243.75 18.00V18.87M244.25 18.00V18.99M244.75 18.00V18.37M245.25 18.00V19.45M245.75 18.00V18.34M246.25 18.00V20.46M246.75 18.00V20.12M247.25 18.00V20.35M247.75 18.00V19.08M248.25 18.00V18.63M248.75 18.00V18.83M249.25 18.00V19.49M249.75 18.00V19.35M250.25 18.00V18.63M250.75 18.00V19.16M251.25 18.00V18.35M251.75 18.00V18.83M252.25 18.00V20.18M252.75 18.00V18.91M253.25 18.00V19.66M253.75 18.00V18.37M254.25 18.00V19.46M254.75 18.00V18.80M255.25 18.00V19.18M255.75 18.00V18.57M256.25 18.00V20.54M256.75 18.00V19.00M257.25 18.00V18.92M257.75 18.00V19.58M258.25 18.00V18.56M258.75 18.00V19.08M259.25 18.00V18.74M259.75 18.00V19.19M260.25 18.00V18.97M260.75 18.00V18.73M261.25 18.00V18.60M261.75 18.00V20.14M262.25 18.00V18.33M262.75 18.00V19.41M263.25 18.00V19.79M263.75 18.00V19.13M264.25 18.00V18.88M264.75 18.00V18.42M265.25 18.00V18.87M265.75 18.00V18.36M266.25 18.00V19.40M266.75 18.00V19.53M267.25 18.00V18.64M267.75 18.00V21.07M268.25 18.00V18.52M268.75 18.00V20.21M269.25 18.00V21.36M269.75 18.00V19.53M270.25 18.00V18.79M270.75 18.00V18.34M271.25 18.00V19.33M271.75 18.00V19.52M272.25 18.00V18.93M272.75 18.00V19.27M273.25 18.00V19.08M273.75 18.00V18.94M274.25 18.00V18.43M274.75 18.00V18.51M275.25 18.00V18.77M275.75 18.00V19.59M276.25 18.00V19.25M276.75 18.00V19.58M277.25 18.00V19.26M277.75 18.00V18.73M278.25 18.00V18.33M278.75 18.00V20.68M279.25 18.00V19.07M279.75 18.00V21.89M280.25 18.00V19.47M280.75 18.00V19.09M281.25 18.00V18.42M281.75 18.00V18.82M282.25 18.00V19.75M282.75 18.00V19.34M283.25 18.00V18.35M283.75 18.00V19.16M284.25 18.00V19.22M284.75 18.00V19.63M285.25 18.00V20.18M285.75 18.00V19.36M286.25 18.00V18.51M286.75 18.00V22.17M287.25 18.00V22.18M287.75 18.00V19.27M288.25 18.00V19.19M288.75 18.00V18.62M289.25 18.00V19.73M289.75 18.00V18.31M290.25 18.00V18.96M290.75 18.00V18.40M291.25 18.00V20.38M291.75 18.00V18.71M292.25 18.00V19.93M292.75 18.00V18.93M293.25 18.00V18.47M293.75 18.00V18.65M294.25 18.00V20.82M294.75 18.00V20.22M295.25 18.00V18.67M295.75 18.00V18.67M296.25 18.00V18.33M296.75 18.00V19.55M297.25 18.00V20.65M297.75 18.00V18.90M298.25 18.00V18.71M298.75 18.00V19.50M299.25 18.00V18.33M299.75 18.00V18.60M300.25 18.00V19.21M300.75 18.00V19.28M301.25 18.00V20.53M301.75 18.00V18.54M302.25 18.00V18.39M302.75 18.00V18.48M303.25 18.00V19.43M303.75 18.00V19.39M304.25 18.00V19.41M304.75 18.00V19.21M305.25 18.00V18.33M305.75 18.00V18.46M306.25 18.00V18.77M306.75 18.00V20.09M307.25 18.00V19.48M307.75 18.00V19.24M308.25 18.00V18.97M308.75 18.00V18.32M309.25 18.00V18.91M309.75 18.00V18.78M310.25 18.00V18.91M310.75 18.00V20.61M311.25 18.00V18.67M311.75 18.00V19.47M312.25 18.00V18.40M312.75 18.00V18.64M313.25 18.00V19.01M313.75 18.00V18.77M314.25 18.00V18.90M314.75 18.00V19.55M315.25 18.00V18.52M315.75 18.00V18.40M316.25 18.00V18.69M316.75 18.00V18.68M317.25 18.00V20.33M317.75 18.00V19.62M318.25 18.00V20.62M318.75 18.00V19.38M319.25 18.00V18.80M319.75 18.00V19.49M320.25 18.00V20.44M320.75 18.00V18.81M321.25 18.00V19.31M321.75 18.00V19.18M322.25 18.00V20.24M322.75 18.00V18.35M323.25 18.00V18.37M323.75 18.00V18.70M324.25 18.00V18.79M324.75 18.00V18.67M325.25 18.00V19.60M325.75 18.00V18.37M326.25 18.00V18.79M326.75 18.00V18.80M327.25 18.00V20.02M327.75 18.00V20.84M328.25 18.00V18.46M328.75 18.00V20.07M329.25 18.00V18.70M329.75 18.00V19.15M330.25 18.00V19.09M330.75 18.00V19.54M331.25 18.00V18.39M331.75 18.00V19.37M332.25 18.00V18.43M332.75 18.00V21.33M333.25 18.00V19.27M333.75 18.00V18.80M334.25 18.00V19.38M334.75 18.00V19.51M335.25 18.00V18.76M335.75 18.00V21.59M336.25 18.00V19.34M336.75 18.00V18.95M337.25 18.00V19.65M337.75 18.00V18.47M338.25 18.00V19.01M338.75 18.00V19.01M339.25 18.00V18.73M339.75 18.00V18.39M340.25 18.00V18.33M340.75 18.00V18.97M341.25 18.00V18.31M341.75 18.00V19.11M342.25 18.00V18.41M342.75 18.00V19.01M343.25 18.00V19.39M343.75 18.00V19.15M344.25 18.00V19.88M344.75 18.00V19.55M345.25 18.00V18.81M345.75 18.00V21.17M346.25 18.00V19.45M346.75 18.00V19.10M347.25 18.00V19.13M347.75 18.00V18.52M348.25 18.00V19.54M348.75 18.00V20.22M349.25 18.00V18.92M349.75 18.00V20.04M350.25 18.00V20.68M350.75 18.00V20.35M351.25 18.00V19.59M351.75 18.00V18.75M352.25 18.00V18.71M352.75 18.00V19.24M353.25 18.00V18.54M353.75 18.00V19.37M354.25 18.00V19.18M354.75 18.00V19.90M355.25 18.00V19.19M355.75 18.00V19.44M356.25 18.00V18.54M356.75 18.00V19.51M357.25 18.00V19.08M357.75 18.00V18.53M358.25 18.00V19.38M358.75 18.00V18.89M359.25 18.00V20.36M359.75 18.00V18.69M360.25 18.00V18.86M360.75 18.00V19.01M361.25 18.00V19.24M361.75 18.00V20.06M362.25 18.00V18.40M362.75 18.00V18.86M363.25 18.00V19.21M363.75 18.00V18.81M364.25 18.00V19.07M364.75 18.00V18.86M365.25 18.00V18.53M365.75 18.00V20.00M366.25 18.00V19.44M366.75 18.00V20.10M367.25 18.00V18.58M367.75 18.00V19.24M368.25 18.00V18.85M368.75 18.00V20.68M369.25 18.00V19.34M369.75 18.00V19.47M370.25 18.00V18.75M370.75 18.00V19.40M371.25 18.00V20.47M371.75 18.00V18.50M372.25 18.00V20.73M372.75 18.00V18.44M373.25 18.00V20.78M373.75 18.00V20.58M374.25 18.00V20.21M374.75 18.00V19.40M375.25 18.00V19.54M375.75 18.00V19.38M376.25 18.00V19.72M376.75 18.00V19.16M377.25 18.00V18.44M377.75 18.00V18.51M378.25 18.00V18.82M378.75 18.00V18.78M379.25 18.00V19.01M379.75 18.00V20.02M380.25 18.00V18.76M380.75 18.00V18.40M381.25 18.00V18.49M381.75 18.00V18.66M382.25 18.00V19.42M382.75 18.00V18.36M383.25 18.00V18.95M383.75 18.00V20.59M384.25 18.00V20.90M384.75 18.00V18.92M385.25 18.00V22.27M385.75 18.00V18.79M386.25 18.00V19.49M386.75 18.00V20.46M387.25 18.00V19.30M387.75 18.00V19.94M388.25 18.00V19.48M388.75 18.00V19.00M389.25 18.00V18.30M389.75 18.00V20.00M390.25 18.00V18.62M390.75 18.00V19.57M391.25 18.00V19.23M391.75 18.00V19.86M392.25 18.00V20.57M392.75 18.00V18.89M393.25 18.00V19.03M393.75 18.00V19.22M394.25 18.00V18.80M394.75 18.00V20.34M395.25 18.00V19.31M395.75 18.00V20.62M396.25 18.00V19.18M396.75 18.00V19.40M397.25 18.00V18.87M397.75 18.00V18.45M398.25 18.00V19.02M398.75 18.00V19.99M399.25 18.00V18.59M399.75 18.00V22.06M400.25 18.00V19.13M400.75 18.00V19.46M401.25 18.00V18.61M401.75 18.00V18.66M402.25 18.00V18.43M402.75 18.00V20.48M403.25 18.00V18.35M403.75 18.00V19.91M404.25 18.00V19.31M404.75 18.00V18.52M405.25 18.00V22.28M405.75 18.00V19.58M406.25 18.00V19.03M406.75 18.00V19.54M407.25 18.00V19.85M407.75 18.00V18.60M408.25 18.00V20.18M408.75 18.00V18.85M409.25 18.00V18.67M409.75 18.00V19.01M410.25 18.00V21.33M410.75 18.00V19.40M411.25 18.00V19.78M411.75 18.00V18.49M412.25 18.00V18.77M412.75 18.00V19.40M413.25 18.00V19.53M413.75 18.00V18.40M414.25 18.00V20.74M414.75 18.00V19.68M415.25 18.00V18.83M415.75 18.00V19.85M416.25 18.00V18.87M416.75 18.00V20.46M417.25 18.00V19.33M417.75 18.00V18.70M418.25 18.00V19.54M418.75 18.00V19.30M419.25 18.00V18.77M419.75 18.00V18.47M420.25 18.00V19.08M420.75 18.00V18.34M421.25 18.00V18.74M421.75 18.00V19.33M422.25 18.00V19.59M422.75 18.00V18.35M423.25 18.00V22.24M423.75 18.00V19.07M424.25 18.00V18.78M424.75 18.00V19.33M425.25 18.00V19.88M425.75 18.00V19.52M426.25 18.00V18.94M426.75 18.00V19.09M427.25 18.00V18.84M427.75 18.00V20.07M428.25 18.00V18.96M428.75 18.00V19.50M429.25 18.00V19.51M429.75 18.00V20.67M430.25 18.00V19.04M430.75 18.00V19.15M431.25 18.00V18.39M431.75 18.00V18.67M432.25 18.00V20.36M432.75 18.00V20.34M433.25 18.00V19.17M433.75 18.00V20.26M434.25 18.00V18.98M434.75 18.00V20.12M435.25 18.00V18.81M435.75 18.00V18.58M436.25 18.00V19.39M436.75 18.00V19.48M437.25 18.00V18.38M437.75 18.00V18.97M438.25 18.00V18.32M438.75 18.00V19.09M439.25 18.00V19.04M439.75 18.00V18.91M440.25 18.00V19.39M440.75 18.00V18.98M441.25 18.00V18.51M441.75 18.00V19.31M442.25 18.00V18.45M442.75 18.00V19.36M443.25 18.00V19.64M443.75 18.00V18.80M444.25 18.00V18.45M444.75 18.00V19.08M445.25 18.00V19.72M445.75 18.00V18.67M446.25 18.00V18.77M446.75 18.00V18.55M447.25 18.00V18.46M447.75 18.00V18.81M448.25 18.00V19.80M448.75 18.00V19.19M449.25 18.00V18.50M449.75 18.00V18.55M450.25 18.00V18.98M450.75 18.00V19.53M451.25 18.00V19.61M451.75 18.00V18.33M452.25 18.00V18.73M452.75 18.00V19.29M453.25 18.00V20.46M453.75 18.00V19.43M454.25 18.00V18.80M454.75 18.00V19.27M455.25 18.00V18.97M455.75 18.00V18.84M456.25 18.00V19.45M456.75 18.00V18.37M457.25 18.00V19.48M457.75 18.00V20.08M458.25 18.00V21.85M458.75 18.00V18.65M459.25 18.00V20.56M459.75 18.00V19.04M460.25 18.00V19.59M460.75 18.00V18.93M461.25 18.00V18.50M461.75 18.00V18.64M462.25 18.00V18.33M462.75 18.00V19.55M463.25 18.00V19.01M463.75 18.00V20.63M464.25 18.00V18.75M464.75 18.00V20.82M465.25 18.00V19.52M465.75 18.00V18.98M466.25 18.00V18.48M466.75 18.00V20.61M467.25 18.00V18.31M467.75 18.00V18.86M468.25 18.00V18.83M468.75 18.00V18.85M469.25 18.00V19.33M469.75 18.00V18.60M470.25 18.00V18.73M470.75 18.00V18.36M471.25 18.00V19.50M471.75 18.00V19.34M472.25 18.00V18.71M472.75 18.00V18.43M473.25 18.00V18.46M473.75 18.00V21.16M474.25 18.00V19.27M474.75 18.00V18.58M475.25 18.00V18.93M475.75 18.00V19.20M476.25 18.00V19.04M476.75 18.00V19.39M477.25 18.00V18.39M477.75 18.00V19.35M478.25 18.00V18.53M478.75 18.00V20.53M479.25 18.00V19.54M479.75 18.00V18.37M480.25 18.00V20.04M480.75 18.00V20.53M481.25 18.00V18.68M481.75 18.00V19.72M482.25 18.00V19.33M482.75 18.00V18.44M483.25 18.00V18.40M483.75 18.00V19.23M484.25 18.00V18.56M484.75 18.00V19.02M485.25 18.00V18.95M485.75 18.00V18.79M486.25 18.00V21.50M486.75 18.00V18.62M487.25 18.00V19.37M487.75 18.00V20.12M488.25 18.00V19.18M488.75 18.00V18.36M489.25 18.00V19.65M489.75 18.00V20.15M490.25 18.00V18.71M490.75 18.00V19.59M491.25 18.00V19.53M491.75 18.00V19.49M492.25 18.00V19.53M492.75 18.00V19.17M493.25 18.00V20.06M493.75 18.00V19.34M494.25 18.00V19.52M494.75 18.00V18.63M495.25 18.00V19.01M495.75 18.00V19.54M496.25 18.00V18.86M496.75 18.00V20.35M497.25 18.00V18.46M497.75 18.00V19.47M498.25 18.00V20.32M498.75 18.00V18.37M499.25 18.00V19.02M499.75 18.00V19.47M500.25 18.00V18.78M500.75 18.00V20.36M501.25 18.00V19.35M501.75 18.00V18.33M502.25 18.00V18.71M502.75 18.00V18.74M503.25 18.00V19.27M503.75 18.00V18.86M504.25 18.00V18.95M504.75 18.00V19.01M505.25 18.00V20.15M505.75 18.00V18.71M506.25 18.00V19.42M506.75 18.00V19.40M507.25 18.00V18.68M507.75 18.00V18.51M508.25 18.00V19.45M508.75 18.00V19.26M509.25 18.00V19.50M509.75 18.00V19.52M510.25 18.00V19.54M510.75 18.00V18.34M511.25 18.00V18.48M511.75 18.00V20.63M512.25 18.00V18.99M512.75 18.00V19.37M513.25 18.00V19.74M513.75 18.00V19.05M514.25 18.00V19.42M514.75 18.00V20.27M515.25 18.00V19.43M515.75 18.00V19.54M516.25 18.00V18.78M516.75 18.00V18.43M517.25 18.00V19.21M517.75 18.00V19.50M518.25 18.00V18.38M518.75 18.00V18.41M519.25 18.00V18.42M519.75 18.00V18.95M520.25 18.00V19.70M520.75 18.00V18.45M521.25 18.00V18.63M521.75 18.00V19.49M522.25 18.00V19.56M522.75 18.00V19.14M523.25 18.00V18.86M523.75 18.00V18.45M524.25 18.00V19.00M524.75 18.00V19.51M525.25 18.00V21.07M525.75 18.00V19.53M526.25 18.00V18.40M526.75 18.00V18.78M527.25 18.00V19.10M527.75 18.00V18.70M528.25 18.00V18.56M528.75 18.00V18.32M529.25 18.00V18.56M529.75 18.00V19.48M530.25 18.00V19.38M530.75 18.00V18.55M531.25 18.00V18.88M531.75 18.00V19.20M532.25 18.00V19.73M532.75 18.00V19.51M533.25 18.00V19.56M533.75 18.00V18.56M534.25 18.00V18.68M534.75 18.00V19.10M535.25 18.00V19.67M535.75 18.00V19.83M536.25 18.00V18.71M536.75 18.00V18.61M537.25 18.00V20.27M537.75 18.00V19.40M538.25 18.00V18.57M538.75 18.00V20.30M539.25 18.00V19.00M539.75 18.00V19.44M540.25 18.00V18.65M540.75 18.00V20.30M541.25 18.00V18.34M541.75 18.00V18.36M542.25 18.00V18.43M542.75 18.00V19.53M543.25 18.00V19.33M543.75 18.00V19.53M544.25 18.00V18.95M544.75 18.00V19.35M545.25 18.00V18.45M545.75 18.00V18.67M546.25 18.00V18.98M546.75 18.00V19.57M547.25 18.00V19.06M547.75 18.00V20.28M548.25 18.00V19.25M548.75 18.00V19.35M549.25 18.00V18.69M549.75 18.00V19.19M550.25 18.00V19.07M550.75 18.00V19.72M551.25 18.00V18.53M551.75 18.00V19.29M552.25 18.00V18.34M552.75 18.00V18.79M553.25 18.00V18.68M553.75 18.00V18.60M554.25 18.00V19.17M554.75 18.00V18.50M555.25 18.00V18.37M555.75 18.00V19.51M556.25 18.00V19.56" stroke="#00a9ce" stroke-width="0.5" fill="none" opacity="0.9"/><rect x="0" y="11.50" width="0.9" height="26.80" fill="#00a9ce"/></svg>
<div class="a" style="left:756.60px;top:468.00px;width:836.20px;height:76.60px;background:rgba(120,144,156,.5);"></div>
<div class="a t" style="top:569.70px;line-height:13.00px;font-size:9.29px;color:#607d8b;left:482.00px;transform:scaleX(1.0110);transform-origin:0 50%;">WINDOW</div>
<div class="a" style="left:479.40px;top:582.80px;width:553.20px;height:58.40px;background:#fff;border:1.00px solid #cfd8dc;box-sizing:border-box;"></div>
<div class="a" style="left:617.10px;top:582.80px;width:1.00px;height:58.40px;background:#cfd8dc;"></div>
<div class="a" style="left:755.50px;top:582.80px;width:1.00px;height:58.40px;background:#cfd8dc;"></div>
<div class="a" style="left:893.90px;top:582.80px;width:1.00px;height:58.40px;background:#cfd8dc;"></div>
<div class="a t" style="left:448.50px;width:200.00px;text-align:center;top:592.60px;line-height:24.00px;font-size:20.40px;color:#455a64;transform:scaleX(.95)">89.25<span style="font-size:11.80px">mA</span></div>
<div class="a t" style="top:618.14px;line-height:15.72px;font-size:11.23px;color:#455a64;left:248.50px;width:600.00px;text-align:center;transform:scaleX(0.9259);transform-origin:50% 50%;">average</div>
<div class="a t" style="left:586.80px;width:200.00px;text-align:center;top:592.60px;line-height:24.00px;font-size:20.40px;color:#455a64;transform:scaleX(.95)">109.04<span style="font-size:11.80px">mA</span></div>
<div class="a t" style="top:618.14px;line-height:15.72px;font-size:11.23px;color:#455a64;left:386.80px;width:600.00px;text-align:center;transform:scaleX(0.9259);transform-origin:50% 50%;">max</div>
<div class="a t" style="left:725.20px;width:200.00px;text-align:center;top:592.60px;line-height:24.00px;font-size:20.40px;color:#455a64;transform:scaleX(.95)">23.43<span style="font-size:11.80px">s</span></div>
<div class="a t" style="top:618.14px;line-height:15.72px;font-size:11.23px;color:#455a64;left:525.20px;width:600.00px;text-align:center;transform:scaleX(0.9259);transform-origin:50% 50%;">time</div>
<div class="a t" style="left:863.50px;width:200.00px;text-align:center;top:592.60px;line-height:24.00px;font-size:20.40px;color:#455a64;transform:scaleX(.95)">2.09<span style="font-size:11.80px">C</span></div>
<div class="a t" style="top:618.14px;line-height:15.72px;font-size:11.23px;color:#455a64;left:663.50px;width:600.00px;text-align:center;transform:scaleX(0.9259);transform-origin:50% 50%;">charge</div>
<div class="a t" style="top:569.70px;line-height:13.00px;font-size:9.29px;color:#607d8b;left:1043.20px;transform:scaleX(0.9497);transform-origin:0 50%;">SELECTION</div>
<div class="a" style="left:1040.80px;top:582.80px;width:551.20px;height:58.40px;background:#cfd8dc;"></div>
<div class="a t" style="top:603.69px;line-height:15.42px;font-size:11.02px;color:#455a64;left:1016.40px;width:600.00px;text-align:center;transform:scaleX(0.9055);transform-origin:50% 50%;">Hold SHIFT+LEFT CLICK and DRAG to make a selection</div>
<div class="a" style="left:1363.60px;top:568.40px;width:109.60px;height:12.00px;background:#fff;border:0.60px solid #e3e8eb;box-sizing:border-box;"></div>
<div class="a t" style="top:567.35px;line-height:13.31px;font-size:9.50px;color:#c3ced4;left:1118.40px;width:600.00px;text-align:center;transform:scaleX(0.9352);transform-origin:50% 50%;">ZOOM TO SELECTION</div>
<div class="a" style="left:1476.80px;top:568.40px;width:69.80px;height:12.00px;background:#fff;border:0.80px solid #90a4ae;box-sizing:border-box;"></div>
<div class="a t" style="top:567.35px;line-height:13.31px;font-size:9.50px;color:#455a64;left:1211.80px;width:600.00px;text-align:center;transform:scaleX(0.9314);transform-origin:50% 50%;">SELECT ALL</div>
<div class="a" style="left:1549.20px;top:568.40px;width:42.80px;height:12.00px;background:#fff;border:0.60px solid #e3e8eb;box-sizing:border-box;"></div>
<div class="a t" style="top:567.35px;line-height:13.31px;font-size:9.50px;color:#c3ced4;left:1270.60px;width:600.00px;text-align:center;transform:scaleX(0.9214);transform-origin:50% 50%;">CLEAR</div>
<div class="a t" style="top:666.42px;line-height:19.96px;font-size:14.26px;color:#455a64;left:145.20px;width:600.00px;text-align:center;transform:scaleX(0.9259);transform-origin:50% 50%;">0</div>
<div class="a t" style="top:698.42px;line-height:19.96px;font-size:14.26px;color:#455a64;left:145.20px;width:600.00px;text-align:center;transform:scaleX(0.9259);transform-origin:50% 50%;">1</div>
<div class="a" style="left:414.60px;top:692.00px;width:1204.00px;height:0.60px;background:#e3e8eb;"></div>
<div class="a" style="left:484.80px;top:669.60px;width:1097.20px;height:3.80px;background:#66cae3;"></div>
<div class="a" style="left:484.80px;top:701.60px;width:107.20px;height:3.80px;background:#66cae3;"></div>
<div class="a" style="left:592.00px;top:701.60px;width:880.00px;height:3.40px;background:#74cfe6;"></div>
<div class="a" style="left:1472.00px;top:702.00px;width:110.00px;height:3.80px;background:#66cae3;"></div>
<div class="a" style="left:396.00px;top:738.80px;width:1242.00px;height:151.60px;overflow:hidden;">
<div class="a t" style="left:10.00px;top:-3.90px;line-height:19.20px;font-size:14.80px;color:#94a7b1;transform:scaleX(0.9072);transform-origin:0 50%">14:58:34.132</div>
<div class="a t" style="left:108.00px;top:-3.90px;line-height:19.20px;font-size:14.80px;color:#94a7b1;transform:scaleX(0.8331);transform-origin:0 50%">DUT OFF</div>
<div class="a t" style="left:10.00px;top:15.54px;line-height:19.20px;font-size:14.80px;color:#94a7b1;transform:scaleX(0.9072);transform-origin:0 50%">14:59:02.250</div>
<div class="a t" style="left:108.00px;top:15.54px;line-height:19.20px;font-size:14.80px;color:#94a7b1;transform:scaleX(0.8430);transform-origin:0 50%">DUT ON</div>
<div class="a t" style="left:10.00px;top:34.98px;line-height:19.20px;font-size:14.80px;color:#94a7b1;transform:scaleX(0.9072);transform-origin:0 50%">15:01:33.094</div>
<div class="a t" style="left:108.00px;top:34.98px;line-height:19.20px;font-size:14.80px;color:#94a7b1;transform:scaleX(0.8331);transform-origin:0 50%">DUT OFF</div>
<div class="a t" style="left:10.00px;top:54.42px;line-height:19.20px;font-size:14.80px;color:#94a7b1;transform:scaleX(0.9072);transform-origin:0 50%">15:01:38.454</div>
<div class="a t" style="left:108.00px;top:54.42px;line-height:19.20px;font-size:14.80px;color:#94a7b1;transform:scaleX(0.8850);transform-origin:0 50%">Device Connected SN:DC5475C4D0C8</div>
<div class="a t" style="left:10.00px;top:73.86px;line-height:19.20px;font-size:14.80px;color:#94a7b1;transform:scaleX(0.9072);transform-origin:0 50%">15:01:38.455</div>
<div class="a t" style="left:108.00px;top:73.86px;line-height:19.20px;font-size:14.80px;color:#94a7b1;transform:scaleX(0.9219);transform-origin:0 50%">Getting serialport options from persistent store DC5475C4D0C8.pc-nrfconnect-ppk</div>
<div class="a t" style="left:10.00px;top:93.30px;line-height:19.20px;font-size:14.80px;color:#94a7b1;transform:scaleX(0.9072);transform-origin:0 50%">15:01:38.847</div>
<div class="a t" style="left:108.00px;top:93.30px;line-height:19.20px;font-size:14.80px;color:#94a7b1;transform:scaleX(0.9219);transform-origin:0 50%">Getting serialport options from persistent store DC5475C4D0C8.pc-nrfconnect-ppk</div>
<div class="a t" style="left:10.00px;top:112.74px;line-height:19.20px;font-size:14.80px;color:#94a7b1;transform:scaleX(0.9072);transform-origin:0 50%">15:02:19.746</div>
<div class="a t" style="left:108.00px;top:112.74px;line-height:19.20px;font-size:14.80px;color:#94a7b1;transform:scaleX(0.8922);transform-origin:0 50%">Device Disconnected SN:DC5475C4D0C8</div>
<div class="a t" style="left:10.00px;top:132.18px;line-height:19.20px;font-size:14.80px;color:#94a7b1;transform:scaleX(0.9072);transform-origin:0 50%">15:02:21.990</div>
<div class="a t" style="left:108.00px;top:132.18px;line-height:19.20px;font-size:14.80px;color:#94a7b1;transform:scaleX(0.8430);transform-origin:0 50%">DUT ON</div>
</div>
<div class="a" style="left:1629.20px;top:838.60px;width:2.40px;height:46.20px;background:#78909c;border-radius:1.20px;"></div>
<div class="a" style="left:412.00px;top:896.00px;width:60.00px;height:20.00px;background:#455a64;"></div>
<div class="a t" style="top:898.49px;line-height:14.21px;font-size:10.15px;color:#cfd8dc;left:142.00px;width:600.00px;text-align:center;transform:scaleX(0.8466);transform-origin:50% 50%;">CLEAR LOG</div>
<div class="a" style="left:480.80px;top:896.00px;width:79.20px;height:20.00px;background:#455a64;"></div>
<div class="a t" style="top:898.49px;line-height:14.21px;font-size:10.15px;color:#cfd8dc;left:220.40px;width:600.00px;text-align:center;transform:scaleX(0.8694);transform-origin:50% 50%;">OPEN LOG FILE</div>
<div class="a t" style="top:897.99px;line-height:14.82px;font-size:10.58px;color:#cfd8dc;left:1398.00px;transform:scaleX(0.8625);transform-origin:0 50%;">AUTOSCROLL LOG</div>
<div class="a" style="left:1487.20px;top:898.40px;width:28.00px;height:15.20px;background:#00a9ce;border-radius:7.60px;"></div>
<div class="a" style="left:1501.90px;top:900.30px;width:11.40px;height:11.40px;background:#ffffff;border-radius:5.70px;"></div>
<div class="a t" style="top:897.99px;line-height:14.82px;font-size:10.58px;color:#cfd8dc;left:1537.60px;transform:scaleX(0.8520);transform-origin:0 50%;">SHOW LOG</div>
<div class="a" style="left:1593.60px;top:898.40px;width:28.00px;height:15.20px;background:#00a9ce;border-radius:7.60px;"></div>
<div class="a" style="left:1608.30px;top:900.30px;width:11.40px;height:11.40px;background:#ffffff;border-radius:5.70px;"></div>
</div></body></html>
